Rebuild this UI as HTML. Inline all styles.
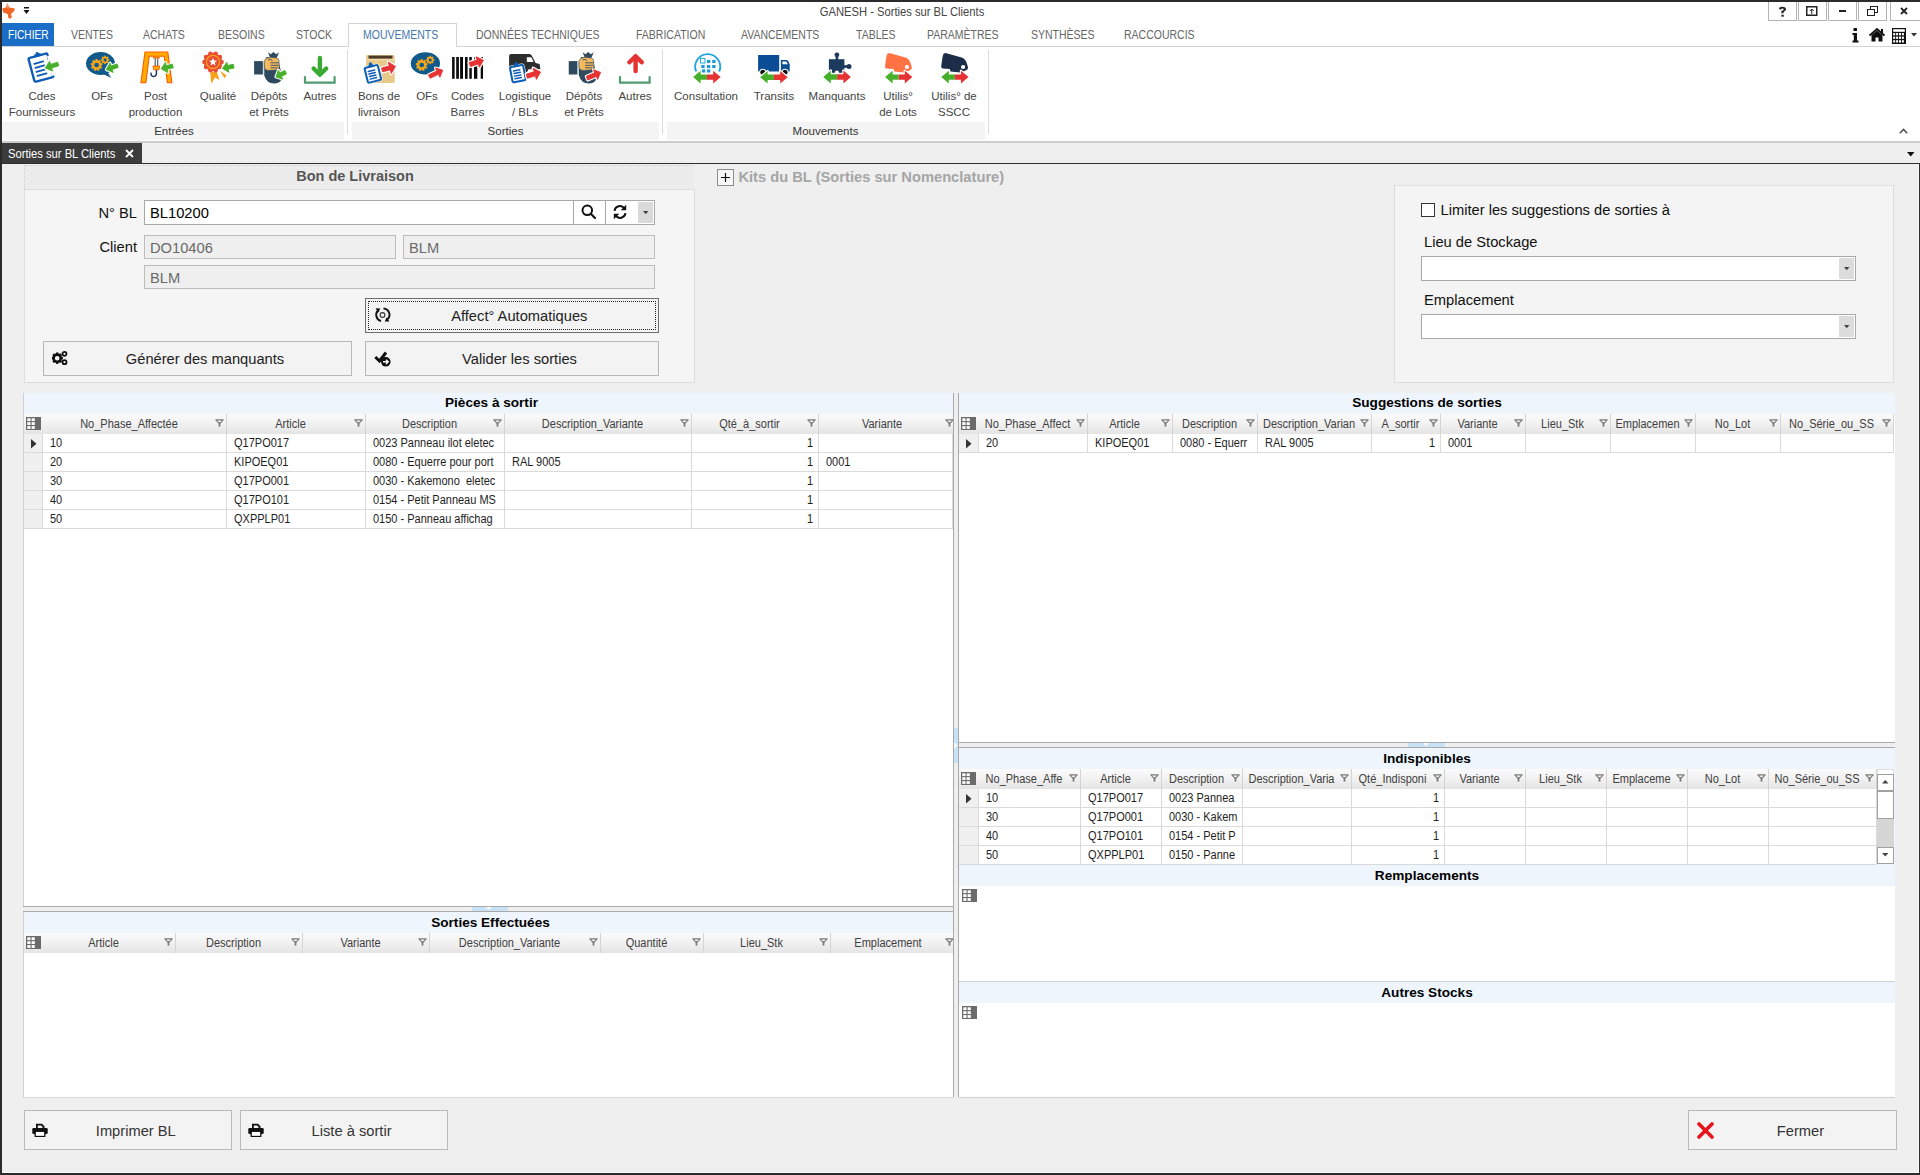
<!DOCTYPE html><html><head><meta charset="utf-8"><title>GANESH - Sorties sur BL Clients</title><style>*{margin:0;padding:0}
html,body{width:1920px;height:1175px;overflow:hidden;background:#efefef;position:relative;font-family:"Liberation Sans",sans-serif}
div{position:absolute}
.t{white-space:nowrap}
</style></head><body><div style="left:0px;top:0px;width:1920px;height:23px;background:#fff"></div>
<div style="left:0px;top:0px;width:1920px;height:2px;background:#2b2b2b"></div>
<div style="left:0px;top:0px;width:2px;height:1175px;background:#2b2b2b"></div>
<div style="left:0px;top:1173px;width:1920px;height:2px;background:#2b2b2b"></div>
<svg style="position:absolute;left:0px;top:0px" width="20" height="22" viewBox="0 0 20 22"><path d="M7.4 3.2 L9.2 7.6 L14.9 8.6 L14.3 10.8 L11.8 13.2 L10.6 14.2 L12 16.6 L10.2 19 L8.2 17.6 L7.8 14.2 L6 13.3 L3.4 12.8 L2.2 8.4 L5.8 7.6 Z" fill="#f26522"/><path d="M7.4 3.2 L9 7.4 L5.9 7.4 Z" fill="#f39a68"/></svg>
<svg style="position:absolute;left:23px;top:7px" width="8" height="8" viewBox="0 0 8 8"><rect x="1" y="0" width="5" height="1.5" fill="#111"/><path d="M0.5 3 L6.5 3 L3.5 7 Z" fill="#111"/></svg>
<div class="t" style="left:751.75px;top:3.10px;width:300px;height:17px;line-height:17px;font-size:12.8px;color:#444;text-align:center;transform:scaleX(0.875);transform-origin:50% 0;">GANESH - Sorties sur BL Clients</div>
<div style="left:1768px;top:2px;width:29px;height:19px;background:#fff;border:1px solid #b4b4b4;border-top:none;box-sizing:border-box"></div>
<div style="left:1798px;top:2px;width:29px;height:19px;background:#fff;border:1px solid #b4b4b4;border-top:none;box-sizing:border-box"></div>
<div style="left:1828px;top:2px;width:29px;height:19px;background:#fff;border:1px solid #b4b4b4;border-top:none;box-sizing:border-box"></div>
<div style="left:1858px;top:2px;width:29px;height:19px;background:#fff;border:1px solid #b4b4b4;border-top:none;box-sizing:border-box"></div>
<div style="left:1890px;top:2px;width:30px;height:19px;background:#fff;border:1px solid #b4b4b4;border-top:none;border-right:none;box-sizing:border-box"></div>
<svg style="position:absolute;left:1778px;top:6px" width="9" height="11" viewBox="0 0 9 11"><path d="M1 3.2 Q1 0.8 4.5 0.8 Q8 0.8 8 3.3 Q8 5 5.6 5.8 L5.6 7.3 L3.4 7.3 L3.4 5 Q5.7 4.5 5.7 3.3 Q5.7 2.5 4.5 2.5 Q3.2 2.5 3.2 3.6 Z" fill="#222"/><rect x="3.4" y="8.7" width="2.3" height="2" fill="#222"/></svg>
<svg style="position:absolute;left:1806px;top:6px" width="12" height="10" viewBox="0 0 12 10"><rect x="0.75" y="0.75" width="10" height="8.5" fill="none" stroke="#222" stroke-width="1.5"/><path d="M5.75 3 L5.75 8 M3.8 5 L5.75 3 L7.7 5" stroke="#222" stroke-width="1" fill="none"/></svg>
<div style="left:1839px;top:10px;width:7px;height:2px;background:#222"></div>
<svg style="position:absolute;left:1867px;top:6px" width="11" height="10" viewBox="0 0 11 10"><rect x="3.5" y="0.5" width="7" height="6" fill="#fff" stroke="#222" stroke-width="1"/><rect x="0.5" y="3.5" width="7" height="6" fill="#fff" stroke="#222" stroke-width="1"/></svg>
<svg style="position:absolute;left:1900px;top:7px" width="8" height="8" viewBox="0 0 8 8"><path d="M1 1 L7 7 M7 1 L1 7" stroke="#222" stroke-width="1.8"/></svg>
<div style="left:2px;top:23px;width:1918px;height:24px;background:#fff"></div>
<div style="left:2px;top:46px;width:1918px;height:1px;background:#d4d4d4"></div>
<div style="left:2px;top:23px;width:52px;height:23px;background:#1a6ec7"></div>
<div class="t" style="left:7.50px;top:26.60px;height:16px;line-height:16px;font-size:12px;color:#fff;transform:scaleX(0.845);transform-origin:0 0;">FICHIER</div>
<div style="left:348px;top:23px;width:109px;height:24px;background:#fff;border:1px solid #d4d4d4;border-bottom:none;box-sizing:border-box"></div>
<div class="t" style="left:70.50px;top:26.60px;height:16px;line-height:16px;font-size:12px;color:#666;transform:scaleX(0.875);transform-origin:0 0;">VENTES</div>
<div class="t" style="left:142.50px;top:26.60px;height:16px;line-height:16px;font-size:12px;color:#666;transform:scaleX(0.875);transform-origin:0 0;">ACHATS</div>
<div class="t" style="left:217.50px;top:26.60px;height:16px;line-height:16px;font-size:12px;color:#666;transform:scaleX(0.875);transform-origin:0 0;">BESOINS</div>
<div class="t" style="left:295.50px;top:26.60px;height:16px;line-height:16px;font-size:12px;color:#666;transform:scaleX(0.875);transform-origin:0 0;">STOCK</div>
<div class="t" style="left:363.30px;top:26.60px;height:16px;line-height:16px;font-size:12px;color:#4677b0;transform:scaleX(0.875);transform-origin:0 0;">MOUVEMENTS</div>
<div class="t" style="left:476.30px;top:26.60px;height:16px;line-height:16px;font-size:12px;color:#666;transform:scaleX(0.875);transform-origin:0 0;">DONNÉES TECHNIQUES</div>
<div class="t" style="left:636.30px;top:26.60px;height:16px;line-height:16px;font-size:12px;color:#666;transform:scaleX(0.875);transform-origin:0 0;">FABRICATION</div>
<div class="t" style="left:741.30px;top:26.60px;height:16px;line-height:16px;font-size:12px;color:#666;transform:scaleX(0.875);transform-origin:0 0;">AVANCEMENTS</div>
<div class="t" style="left:856.30px;top:26.60px;height:16px;line-height:16px;font-size:12px;color:#666;transform:scaleX(0.875);transform-origin:0 0;">TABLES</div>
<div class="t" style="left:926.50px;top:26.60px;height:16px;line-height:16px;font-size:12px;color:#666;transform:scaleX(0.875);transform-origin:0 0;">PARAMÈTRES</div>
<div class="t" style="left:1031.30px;top:26.60px;height:16px;line-height:16px;font-size:12px;color:#666;transform:scaleX(0.875);transform-origin:0 0;">SYNTHÈSES</div>
<div class="t" style="left:1124.40px;top:26.60px;height:16px;line-height:16px;font-size:12px;color:#666;transform:scaleX(0.875);transform-origin:0 0;">RACCOURCIS</div>
<svg style="position:absolute;left:1852px;top:28px" width="7" height="15" viewBox="0 0 7 15"><rect x="1.5" y="0" width="3.5" height="3" fill="#111"/><path d="M0.5 5 L5 5 L5 12.5 L6.5 12.5 L6.5 14.5 L0.5 14.5 L0.5 12.5 L1.8 12.5 L1.8 7 L0.5 7 Z" fill="#111"/></svg>
<svg style="position:absolute;left:1869px;top:28px" width="16" height="14" viewBox="0 0 16 14"><path d="M0.5 7.5 L8 1 L15.5 7.5" stroke="#111" stroke-width="1.8" fill="none"/><rect x="12" y="1" width="2" height="4" fill="#111"/><path d="M2.5 7 L8 2.5 L13.5 7 L13.5 13.5 L9.5 13.5 L9.5 9.5 L6.5 9.5 L6.5 13.5 L2.5 13.5 Z" fill="#111"/></svg>
<svg style="position:absolute;left:1892px;top:28px" width="14" height="16" viewBox="0 0 14 16"><rect x="0" y="0" width="14" height="16" fill="#111"/><rect x="1.2" y="1.2" width="11.6" height="2.6" fill="#fff"/><rect x="1.2" y="5.0" width="2" height="2.3" fill="#fff"/><rect x="4.1" y="5.0" width="2" height="2.3" fill="#fff"/><rect x="7.0" y="5.0" width="2" height="2.3" fill="#fff"/><rect x="9.9" y="5.0" width="2" height="2.3" fill="#fff"/><rect x="1.2" y="8.6" width="2" height="2.3" fill="#fff"/><rect x="4.1" y="8.6" width="2" height="2.3" fill="#fff"/><rect x="7.0" y="8.6" width="2" height="2.3" fill="#fff"/><rect x="9.9" y="8.6" width="2" height="2.3" fill="#fff"/><rect x="1.2" y="12.2" width="2" height="2.3" fill="#fff"/><rect x="4.1" y="12.2" width="2" height="2.3" fill="#fff"/><rect x="7.0" y="12.2" width="2" height="2.3" fill="#fff"/><rect x="9.9" y="12.2" width="2" height="2.3" fill="#fff"/></svg>
<svg style="position:absolute;left:1911px;top:33px" width="7" height="4" viewBox="0 0 7 4"><path d="M0 0 L6 0 L3 3.5 Z" fill="#333"/></svg>
<div style="left:2px;top:47px;width:1918px;height:94px;background:#fff"></div>
<div style="left:2px;top:122px;width:342px;height:18px;background:#f4f4f4"></div>
<div style="left:352px;top:122px;width:307px;height:18px;background:#f4f4f4"></div>
<div style="left:667px;top:122px;width:318px;height:18px;background:#f4f4f4"></div>
<div style="left:347px;top:50px;width:1px;height:84px;background:#dcdcdc"></div>
<div style="left:662px;top:50px;width:1px;height:84px;background:#dcdcdc"></div>
<div style="left:988px;top:50px;width:1px;height:84px;background:#dcdcdc"></div>
<div style="left:2px;top:141px;width:1918px;height:2px;background:#cdcdcd"></div>
<div class="t" style="left:114.00px;top:123.00px;width:120px;height:16px;line-height:16px;font-size:11.5px;color:#333;text-align:center;">Entrées</div>
<div class="t" style="left:445.50px;top:123.00px;width:120px;height:16px;line-height:16px;font-size:11.5px;color:#333;text-align:center;">Sorties</div>
<div class="t" style="left:745.50px;top:123.00px;width:160px;height:16px;line-height:16px;font-size:11.5px;color:#333;text-align:center;">Mouvements</div>
<svg style="position:absolute;left:1899px;top:128px" width="9" height="6" viewBox="0 0 9 6"><path d="M0.8 5.2 L4.5 1.5 L8.2 5.2" stroke="#555" stroke-width="1.6" fill="none"/></svg>
<div class="t" style="left:-8.00px;top:87.80px;width:100px;height:16px;line-height:16px;font-size:11.5px;color:#444;text-align:center;">Cdes</div>
<div class="t" style="left:-8.00px;top:103.80px;width:100px;height:16px;line-height:16px;font-size:11.5px;color:#444;text-align:center;">Fournisseurs</div>
<div class="t" style="left:52.00px;top:87.80px;width:100px;height:16px;line-height:16px;font-size:11.5px;color:#444;text-align:center;">OFs</div>
<div class="t" style="left:105.50px;top:87.80px;width:100px;height:16px;line-height:16px;font-size:11.5px;color:#444;text-align:center;">Post</div>
<div class="t" style="left:105.50px;top:103.80px;width:100px;height:16px;line-height:16px;font-size:11.5px;color:#444;text-align:center;">production</div>
<div class="t" style="left:168.00px;top:87.80px;width:100px;height:16px;line-height:16px;font-size:11.5px;color:#444;text-align:center;">Qualité</div>
<div class="t" style="left:219.00px;top:87.80px;width:100px;height:16px;line-height:16px;font-size:11.5px;color:#444;text-align:center;">Dépôts</div>
<div class="t" style="left:219.00px;top:103.80px;width:100px;height:16px;line-height:16px;font-size:11.5px;color:#444;text-align:center;">et Prêts</div>
<div class="t" style="left:270.00px;top:87.80px;width:100px;height:16px;line-height:16px;font-size:11.5px;color:#444;text-align:center;">Autres</div>
<div class="t" style="left:329.00px;top:87.80px;width:100px;height:16px;line-height:16px;font-size:11.5px;color:#444;text-align:center;">Bons de</div>
<div class="t" style="left:329.00px;top:103.80px;width:100px;height:16px;line-height:16px;font-size:11.5px;color:#444;text-align:center;">livraison</div>
<div class="t" style="left:377.00px;top:87.80px;width:100px;height:16px;line-height:16px;font-size:11.5px;color:#444;text-align:center;">OFs</div>
<div class="t" style="left:417.50px;top:87.80px;width:100px;height:16px;line-height:16px;font-size:11.5px;color:#444;text-align:center;">Codes</div>
<div class="t" style="left:417.50px;top:103.80px;width:100px;height:16px;line-height:16px;font-size:11.5px;color:#444;text-align:center;">Barres</div>
<div class="t" style="left:475.00px;top:87.80px;width:100px;height:16px;line-height:16px;font-size:11.5px;color:#444;text-align:center;">Logistique</div>
<div class="t" style="left:475.00px;top:103.80px;width:100px;height:16px;line-height:16px;font-size:11.5px;color:#444;text-align:center;">/ BLs</div>
<div class="t" style="left:534.00px;top:87.80px;width:100px;height:16px;line-height:16px;font-size:11.5px;color:#444;text-align:center;">Dépôts</div>
<div class="t" style="left:534.00px;top:103.80px;width:100px;height:16px;line-height:16px;font-size:11.5px;color:#444;text-align:center;">et Prêts</div>
<div class="t" style="left:585.00px;top:87.80px;width:100px;height:16px;line-height:16px;font-size:11.5px;color:#444;text-align:center;">Autres</div>
<div class="t" style="left:656.00px;top:87.80px;width:100px;height:16px;line-height:16px;font-size:11.5px;color:#444;text-align:center;">Consultation</div>
<div class="t" style="left:724.00px;top:87.80px;width:100px;height:16px;line-height:16px;font-size:11.5px;color:#444;text-align:center;">Transits</div>
<div class="t" style="left:787.00px;top:87.80px;width:100px;height:16px;line-height:16px;font-size:11.5px;color:#444;text-align:center;">Manquants</div>
<div class="t" style="left:848.00px;top:87.80px;width:100px;height:16px;line-height:16px;font-size:11.5px;color:#444;text-align:center;">Utilis°</div>
<div class="t" style="left:848.00px;top:103.80px;width:100px;height:16px;line-height:16px;font-size:11.5px;color:#444;text-align:center;">de Lots</div>
<div class="t" style="left:904.00px;top:87.80px;width:100px;height:16px;line-height:16px;font-size:11.5px;color:#444;text-align:center;">Utilis° de</div>
<div class="t" style="left:904.00px;top:103.80px;width:100px;height:16px;line-height:16px;font-size:11.5px;color:#444;text-align:center;">SSCC</div>
<svg style="position:absolute;left:0;top:0" width="1000" height="100" viewBox="0 0 1000 100"><g transform="translate(40.9,67.6) rotate(-15)"><rect x="-9.75" y="-12.25" width="19.5" height="24.5" rx="1.5" fill="#fff" stroke="#0d5cb6" stroke-width="2.4"/><path d="M-4.29 -11.25 L-2.92 -14.25 L2.92 -14.25 L4.29 -11.25 Z" fill="#0d5cb6"/><circle cx="0" cy="-14.55" r="1.6" fill="#0d5cb6"/><path d="M-5.46 -5.39 L3.90 -5.39" stroke="#0d5cb6" stroke-width="1.80" stroke-linecap="round"/><path d="M-5.46 -1.22 L3.90 -1.22" stroke="#0d5cb6" stroke-width="1.80" stroke-linecap="round"/><path d="M-5.46 2.94 L3.90 2.94" stroke="#0d5cb6" stroke-width="1.80" stroke-linecap="round"/><path d="M-5.46 7.11 L3.90 7.11" stroke="#0d5cb6" stroke-width="1.80" stroke-linecap="round"/></g><path d="M47 56 L56 54 L60 73 L52 76 Z" fill="#fff"/><path d="M45.30 68.00 L52.64 71.06 L51.69 68.01 L58.76 65.81 L57.64 62.19 L50.56 64.38 L49.62 61.32 Z" fill="#fff" stroke="#fff" stroke-width="3.0" stroke-linejoin="round"/><path d="M45.30 68.00 L52.64 71.06 L51.69 68.01 L58.76 65.81 L57.64 62.19 L50.56 64.38 L49.62 61.32 Z" fill="#46b02a" stroke="#46b02a" stroke-width="0.9" stroke-linejoin="round"/><ellipse cx="100.5" cy="63.5" rx="14.5" ry="11.4" fill="#0f5a8a"/><path d="M99 72 L111.3 78 L105.5 69 Z" fill="#0f5a8a"/><circle cx="96.6" cy="65" r="3.5" fill="none" stroke="#f6a61c" stroke-width="2.3"/><rect x="95.50" y="59.10" width="2.20" height="2.40" fill="#f6a61c" transform="rotate(0.0 96.6 65)"/><rect x="95.50" y="59.10" width="2.20" height="2.40" fill="#f6a61c" transform="rotate(40.0 96.6 65)"/><rect x="95.50" y="59.10" width="2.20" height="2.40" fill="#f6a61c" transform="rotate(80.0 96.6 65)"/><rect x="95.50" y="59.10" width="2.20" height="2.40" fill="#f6a61c" transform="rotate(120.0 96.6 65)"/><rect x="95.50" y="59.10" width="2.20" height="2.40" fill="#f6a61c" transform="rotate(160.0 96.6 65)"/><rect x="95.50" y="59.10" width="2.20" height="2.40" fill="#f6a61c" transform="rotate(200.0 96.6 65)"/><rect x="95.50" y="59.10" width="2.20" height="2.40" fill="#f6a61c" transform="rotate(240.0 96.6 65)"/><rect x="95.50" y="59.10" width="2.20" height="2.40" fill="#f6a61c" transform="rotate(280.0 96.6 65)"/><rect x="95.50" y="59.10" width="2.20" height="2.40" fill="#f6a61c" transform="rotate(320.0 96.6 65)"/><circle cx="105.1" cy="59.9" r="2.4" fill="none" stroke="#f6a61c" stroke-width="1.7"/><rect x="104.25" y="55.70" width="1.70" height="1.80" fill="#f6a61c" transform="rotate(0.0 105.1 59.9)"/><rect x="104.25" y="55.70" width="1.70" height="1.80" fill="#f6a61c" transform="rotate(45.0 105.1 59.9)"/><rect x="104.25" y="55.70" width="1.70" height="1.80" fill="#f6a61c" transform="rotate(90.0 105.1 59.9)"/><rect x="104.25" y="55.70" width="1.70" height="1.80" fill="#f6a61c" transform="rotate(135.0 105.1 59.9)"/><rect x="104.25" y="55.70" width="1.70" height="1.80" fill="#f6a61c" transform="rotate(180.0 105.1 59.9)"/><rect x="104.25" y="55.70" width="1.70" height="1.80" fill="#f6a61c" transform="rotate(225.0 105.1 59.9)"/><rect x="104.25" y="55.70" width="1.70" height="1.80" fill="#f6a61c" transform="rotate(270.0 105.1 59.9)"/><rect x="104.25" y="55.70" width="1.70" height="1.80" fill="#f6a61c" transform="rotate(315.0 105.1 59.9)"/><path d="M106.30 69.50 L113.16 72.38 L112.18 69.44 L118.27 67.41 L117.13 63.99 L111.04 66.02 L110.06 63.08 Z" fill="#fff" stroke="#fff" stroke-width="3.0" stroke-linejoin="round"/><path d="M106.30 69.50 L113.16 72.38 L112.18 69.44 L118.27 67.41 L117.13 63.99 L111.04 66.02 L110.06 63.08 Z" fill="#46b02a" stroke="#46b02a" stroke-width="0.9" stroke-linejoin="round"/><path d="M145 52 L167.8 52 L171.9 82.7 L167.4 82.7 L164.2 56.3 L149.2 56.3 L145.9 82.7 L140.9 82.7 Z" fill="#ffab00" stroke="#ff5a00" stroke-width="1.1" stroke-linejoin="round"/><rect x="153" y="56.3" width="6.8" height="2.3" fill="#ff7a00"/><path d="M155.2 58.5 L155.2 66 M157.7 58.5 L157.7 66" stroke="#4a5568" stroke-width="1.1"/><path d="M153 66 L159.8 66 L159 69.8 L153.8 69.8 Z" fill="#ffab00" stroke="#ff5a00" stroke-width="0.9"/><path d="M156.4 70 L156.4 73.8 A2.7 2.7 0 1 1 151.3 72.6" stroke="#1e3a5f" stroke-width="1.5" fill="none"/><path d="M161.20 68.80 L167.86 72.54 L167.09 69.33 L173.25 67.85 L172.35 64.15 L166.20 65.64 L165.42 62.43 Z" fill="#fff" stroke="#fff" stroke-width="3.0" stroke-linejoin="round"/><path d="M161.20 68.80 L167.86 72.54 L167.09 69.33 L173.25 67.85 L172.35 64.15 L166.20 65.64 L165.42 62.43 Z" fill="#46b02a" stroke="#46b02a" stroke-width="0.9" stroke-linejoin="round"/><path d="M210.2 72.3 L216.7 71.8 L219.4 80 L215 77.6 L211.3 83.7 Z" fill="#f7a21b"/><path d="M220.1 71.1 L226.6 75.2 L224.5 78.2 Z" fill="#f7a21b"/><circle cx="221.60" cy="62.00" r="2.2" fill="#e94b35"/><circle cx="219.96" cy="67.05" r="2.2" fill="#e94b35"/><circle cx="215.66" cy="70.18" r="2.2" fill="#e94b35"/><circle cx="210.34" cy="70.18" r="2.2" fill="#e94b35"/><circle cx="206.04" cy="67.05" r="2.2" fill="#e94b35"/><circle cx="204.40" cy="62.00" r="2.2" fill="#e94b35"/><circle cx="206.04" cy="56.95" r="2.2" fill="#e94b35"/><circle cx="210.34" cy="53.82" r="2.2" fill="#e94b35"/><circle cx="215.66" cy="53.82" r="2.2" fill="#e94b35"/><circle cx="219.96" cy="56.95" r="2.2" fill="#e94b35"/><circle cx="213" cy="62" r="9.2" fill="#e94b35"/><circle cx="213" cy="62" r="6.6" fill="none" stroke="#f7a21b" stroke-width="1.3"/><path d="M213.00 57.70 L214.12 60.46 L217.09 60.67 L214.81 62.59 L215.53 65.48 L213.00 63.90 L210.47 65.48 L211.19 62.59 L208.91 60.67 L211.88 60.46 Z" fill="#fff"/><path d="M222.50 68.40 L228.88 72.34 L228.26 69.20 L234.07 68.06 L233.33 64.34 L227.53 65.48 L226.91 62.34 Z" fill="#fff" stroke="#fff" stroke-width="3.0" stroke-linejoin="round"/><path d="M222.50 68.40 L228.88 72.34 L228.26 69.20 L234.07 68.06 L233.33 64.34 L227.53 65.48 L226.91 62.34 Z" fill="#46b02a" stroke="#46b02a" stroke-width="0.9" stroke-linejoin="round"/><g transform="translate(0,0)"><path d="M266.5 57 Q262.5 66 264.3 75.5 Q266.5 83.6 274.5 83.5 Q281.8 83.2 281.5 77 Q281 67 276.5 57 Z" fill="#2f4a5e"/><path d="M268 52.3 L270.8 54.2 L273.5 52 L276.2 54.2 L279 52.3 L277.2 57 L269.8 57 Z" fill="#2f4a5e"/><rect x="254.1" y="61.1" width="8.8" height="13.4" fill="#2f4a5e"/><rect x="262.9" y="61.5" width="1.4" height="12.6" fill="#cfdce8"/><path d="M264.3 61 Q265.5 57.3 270.5 57.3 L276.5 58 Q279.3 58.8 279 61 L279.3 66.5 Q279 69.8 275.5 70 L268.5 70.4 Q264.6 70.5 264.3 67 Z" fill="#f5b95e" stroke="#2f4a5e" stroke-width="0.6"/><path d="M270.5 62.8 L278.8 62.8 M270.5 65.3 L278.6 65.3 M270.5 67.8 L277.6 67.8" stroke="#2f4a5e" stroke-width="0.9"/><path d="M268 60 Q270 58.6 272.5 60.5" stroke="#2f4a5e" stroke-width="0.9" fill="none"/></g><path d="M275.90 76.90 L282.75 79.16 L281.41 76.36 L286.52 73.91 L284.88 70.49 L279.77 72.94 L278.43 70.14 Z" fill="#fff" stroke="#fff" stroke-width="3.0" stroke-linejoin="round"/><path d="M275.90 76.90 L282.75 79.16 L281.41 76.36 L286.52 73.91 L284.88 70.49 L279.77 72.94 L278.43 70.14 Z" fill="#46b02a" stroke="#46b02a" stroke-width="0.9" stroke-linejoin="round"/><path d="M319.9 58 L319.9 70" stroke="#3aaa35" stroke-width="4.4" stroke-linecap="round"/><path d="M313.6 68.5 L319.9 74.8 L326.2 68.5" stroke="#3aaa35" stroke-width="4.4" fill="none" stroke-linecap="round" stroke-linejoin="round"/><path d="M305 77 L305 82.6 L334.6 82.6 L334.6 77" stroke="#4e9c70" stroke-width="2.2" fill="none" stroke-linecap="round"/><rect x="366.1" y="55.1" width="28.6" height="27.9" rx="1.5" fill="#e9c98a"/><rect x="368.5" y="55.6" width="24" height="3.2" fill="#4b3a28"/><rect x="367" y="58.8" width="27" height="1.5" fill="#f3dcae"/><g transform="translate(372.85,73.85) rotate(-14)"><rect x="-6.8" y="-7.7" width="13.6" height="15.4" rx="1.5" fill="#fff" stroke="#fff" stroke-width="3"/><rect x="-6.8" y="-7.7" width="13.6" height="15.4" rx="1.5" fill="#fff" stroke="#0d5cb6" stroke-width="2.0"/><path d="M-2.99 -6.70 L-2.04 -9.70 L2.04 -9.70 L2.99 -6.70 Z" fill="#0d5cb6"/><circle cx="0" cy="-10.00" r="1.6" fill="#0d5cb6"/><path d="M-3.81 -3.39 L2.72 -3.39" stroke="#0d5cb6" stroke-width="1.50" stroke-linecap="round"/><path d="M-3.81 -0.77 L2.72 -0.77" stroke="#0d5cb6" stroke-width="1.50" stroke-linecap="round"/><path d="M-3.81 1.85 L2.72 1.85" stroke="#0d5cb6" stroke-width="1.50" stroke-linecap="round"/><path d="M-3.81 4.47 L2.72 4.47" stroke="#0d5cb6" stroke-width="1.50" stroke-linecap="round"/></g><path d="M395.40 66.40 L388.29 62.17 L389.28 65.94 L381.59 67.97 L382.61 71.83 L390.30 69.81 L391.29 73.58 Z" fill="#fff" stroke="#fff" stroke-width="3.2" stroke-linejoin="round"/><path d="M395.40 66.40 L388.29 62.17 L389.28 65.94 L381.59 67.97 L382.61 71.83 L390.30 69.81 L391.29 73.58 Z" fill="#e63232" stroke="#e63232" stroke-width="0.9" stroke-linejoin="round"/><ellipse cx="425.4" cy="63.4" rx="14.6" ry="11.2" fill="#0f5a8a"/><path d="M424 72 L436 78 L430.5 69 Z" fill="#0f5a8a"/><circle cx="421.7" cy="65" r="3.5" fill="none" stroke="#f6a61c" stroke-width="2.3"/><rect x="420.60" y="59.10" width="2.20" height="2.40" fill="#f6a61c" transform="rotate(0.0 421.7 65)"/><rect x="420.60" y="59.10" width="2.20" height="2.40" fill="#f6a61c" transform="rotate(40.0 421.7 65)"/><rect x="420.60" y="59.10" width="2.20" height="2.40" fill="#f6a61c" transform="rotate(80.0 421.7 65)"/><rect x="420.60" y="59.10" width="2.20" height="2.40" fill="#f6a61c" transform="rotate(120.0 421.7 65)"/><rect x="420.60" y="59.10" width="2.20" height="2.40" fill="#f6a61c" transform="rotate(160.0 421.7 65)"/><rect x="420.60" y="59.10" width="2.20" height="2.40" fill="#f6a61c" transform="rotate(200.0 421.7 65)"/><rect x="420.60" y="59.10" width="2.20" height="2.40" fill="#f6a61c" transform="rotate(240.0 421.7 65)"/><rect x="420.60" y="59.10" width="2.20" height="2.40" fill="#f6a61c" transform="rotate(280.0 421.7 65)"/><rect x="420.60" y="59.10" width="2.20" height="2.40" fill="#f6a61c" transform="rotate(320.0 421.7 65)"/><circle cx="430.2" cy="60" r="2.4" fill="none" stroke="#f6a61c" stroke-width="1.7"/><rect x="429.35" y="55.80" width="1.70" height="1.80" fill="#f6a61c" transform="rotate(0.0 430.2 60)"/><rect x="429.35" y="55.80" width="1.70" height="1.80" fill="#f6a61c" transform="rotate(45.0 430.2 60)"/><rect x="429.35" y="55.80" width="1.70" height="1.80" fill="#f6a61c" transform="rotate(90.0 430.2 60)"/><rect x="429.35" y="55.80" width="1.70" height="1.80" fill="#f6a61c" transform="rotate(135.0 430.2 60)"/><rect x="429.35" y="55.80" width="1.70" height="1.80" fill="#f6a61c" transform="rotate(180.0 430.2 60)"/><rect x="429.35" y="55.80" width="1.70" height="1.80" fill="#f6a61c" transform="rotate(225.0 430.2 60)"/><rect x="429.35" y="55.80" width="1.70" height="1.80" fill="#f6a61c" transform="rotate(270.0 430.2 60)"/><rect x="429.35" y="55.80" width="1.70" height="1.80" fill="#f6a61c" transform="rotate(315.0 430.2 60)"/><path d="M442.70 70.20 L435.41 67.92 L436.83 70.90 L428.48 74.89 L430.12 78.31 L438.47 74.33 L439.89 77.31 Z" fill="#fff" stroke="#fff" stroke-width="3.0" stroke-linejoin="round"/><path d="M442.70 70.20 L435.41 67.92 L436.83 70.90 L428.48 74.89 L430.12 78.31 L438.47 74.33 L439.89 77.31 Z" fill="#e63232" stroke="#e63232" stroke-width="0.9" stroke-linejoin="round"/><rect x="452.1" y="57" width="2.50" height="21.8" fill="#0a0a0a"/><rect x="456.2" y="57" width="2.70" height="21.8" fill="#0a0a0a"/><rect x="460.1" y="57" width="2.90" height="21.8" fill="#0a0a0a"/><rect x="465" y="57" width="2.60" height="21.8" fill="#0a0a0a"/><rect x="469.3" y="57" width="2.50" height="21.8" fill="#0a0a0a"/><rect x="474" y="57" width="3.30" height="21.8" fill="#0a0a0a"/><rect x="480.7" y="57" width="2.30" height="21.8" fill="#0a0a0a"/><path d="M483.40 60.20 L476.02 56.76 L477.05 60.01 L469.17 62.50 L470.43 66.50 L478.31 64.01 L479.34 67.25 Z" fill="#fff" stroke="#fff" stroke-width="3.4" stroke-linejoin="round"/><path d="M483.40 60.20 L476.02 56.76 L477.05 60.01 L469.17 62.50 L470.43 66.50 L478.31 64.01 L479.34 67.25 Z" fill="#e63232" stroke="#e63232" stroke-width="0.9" stroke-linejoin="round"/><path d="M509.1 56 Q509.1 54.1 511 54.1 L529.5 54.1 Q531 54.1 532 56 L535.6 63 L539.6 64 L540.4 69.3 L528.5 69.3 L527 72 L509.1 72 Z" fill="#2d2d2d"/><path d="M526.8 57.2 L531.3 57.2 L533.6 62 L526.8 62 Z" fill="#fff"/><g transform="translate(517.85,73.6) rotate(-11)"><rect x="-6.7" y="-7.7" width="13.4" height="15.4" rx="1.5" fill="#fff" stroke="#fff" stroke-width="3"/><rect x="-6.7" y="-7.7" width="13.4" height="15.4" rx="1.5" fill="#fff" stroke="#0d5cb6" stroke-width="2.0"/><path d="M-2.95 -6.70 L-2.01 -9.70 L2.01 -9.70 L2.95 -6.70 Z" fill="#0d5cb6"/><circle cx="0" cy="-10.00" r="1.6" fill="#0d5cb6"/><path d="M-3.75 -3.39 L2.68 -3.39" stroke="#0d5cb6" stroke-width="1.50" stroke-linecap="round"/><path d="M-3.75 -0.77 L2.68 -0.77" stroke="#0d5cb6" stroke-width="1.50" stroke-linecap="round"/><path d="M-3.75 1.85 L2.68 1.85" stroke="#0d5cb6" stroke-width="1.50" stroke-linecap="round"/><path d="M-3.75 4.47 L2.68 4.47" stroke="#0d5cb6" stroke-width="1.50" stroke-linecap="round"/></g><path d="M540.50 72.10 L533.09 68.26 L534.15 71.81 L526.20 74.19 L527.40 78.21 L535.35 75.83 L536.41 79.38 Z" fill="#fff" stroke="#fff" stroke-width="3.2" stroke-linejoin="round"/><path d="M540.50 72.10 L533.09 68.26 L534.15 71.81 L526.20 74.19 L527.40 78.21 L535.35 75.83 L536.41 79.38 Z" fill="#e63232" stroke="#e63232" stroke-width="0.9" stroke-linejoin="round"/><g transform="translate(314.65,0)"><path d="M266.5 57 Q262.5 66 264.3 75.5 Q266.5 83.6 274.5 83.5 Q281.8 83.2 281.5 77 Q281 67 276.5 57 Z" fill="#2f4a5e"/><path d="M268 52.3 L270.8 54.2 L273.5 52 L276.2 54.2 L279 52.3 L277.2 57 L269.8 57 Z" fill="#2f4a5e"/><rect x="254.1" y="61.1" width="8.8" height="13.4" fill="#2f4a5e"/><rect x="262.9" y="61.5" width="1.4" height="12.6" fill="#cfdce8"/><path d="M264.3 61 Q265.5 57.3 270.5 57.3 L276.5 58 Q279.3 58.8 279 61 L279.3 66.5 Q279 69.8 275.5 70 L268.5 70.4 Q264.6 70.5 264.3 67 Z" fill="#f5b95e" stroke="#2f4a5e" stroke-width="0.6"/><path d="M270.5 62.8 L278.8 62.8 M270.5 65.3 L278.6 65.3 M270.5 67.8 L277.6 67.8" stroke="#2f4a5e" stroke-width="0.9"/><path d="M268 60 Q270 58.6 272.5 60.5" stroke="#2f4a5e" stroke-width="0.9" fill="none"/></g><path d="M600.60 72.40 L593.46 69.68 L594.76 72.72 L586.22 76.36 L587.78 80.04 L596.33 76.40 L597.62 79.43 Z" fill="#fff" stroke="#fff" stroke-width="3.0" stroke-linejoin="round"/><path d="M600.60 72.40 L593.46 69.68 L594.76 72.72 L586.22 76.36 L587.78 80.04 L596.33 76.40 L597.62 79.43 Z" fill="#e63232" stroke="#e63232" stroke-width="0.9" stroke-linejoin="round"/><path d="M635.6 71 L635.6 60" stroke="#e63232" stroke-width="4.4" stroke-linecap="round"/><path d="M629.4 62.3 L635.6 56.2 L641.8 62.3" stroke="#e63232" stroke-width="4.4" fill="none" stroke-linecap="round" stroke-linejoin="round"/><path d="M620 77 L620 82.6 L649.6 82.6 L649.6 77" stroke="#4e9c70" stroke-width="2.2" fill="none" stroke-linecap="round"/><path d="M696.2 71.5 A12.5 12.5 0 1 1 719.2 71.5" stroke="#1ea5e0" stroke-width="1.9" fill="none"/><rect x="700.4" y="58.4" width="4.6" height="4.6" fill="#fff" stroke="#1ea5e0" stroke-width="1"/><rect x="707" y="59.9" width="3.3" height="3.1" fill="#1a9ad6"/><rect x="712.2" y="59.9" width="3.3" height="3.1" fill="#1a9ad6"/><rect x="701.3" y="65" width="3.3" height="3.1" fill="#1a9ad6"/><rect x="707" y="65" width="3.3" height="3.1" fill="#1a9ad6"/><rect x="712.2" y="65" width="3.3" height="3.1" fill="#1a9ad6"/><rect x="701.9" y="69.4" width="3.3" height="3.1" fill="#1a9ad6"/><rect x="707" y="69.4" width="3.3" height="3.1" fill="#1a9ad6"/><path d="M693.1 77.1 L700.6 70.8 L700.6 74.39999999999999 L706.9000000000001 74.39999999999999 L706.9000000000001 79.8 L700.6 79.8 L700.6 83.4 Z M720.7 77.1 L713.2 70.8 L713.2 74.39999999999999 L706.9000000000001 74.39999999999999 L706.9000000000001 79.8 L713.2 79.8 L713.2 83.4 Z" fill="#fff" stroke="#fff" stroke-width="2.4" stroke-linejoin="round"/><path d="M693.1 77.1 L700.6 70.8 L700.6 74.39999999999999 L706.9000000000001 74.39999999999999 L706.9000000000001 79.8 L700.6 79.8 L700.6 83.4 Z" fill="#46b02a"/><path d="M720.7 77.1 L713.2 70.8 L713.2 74.39999999999999 L706.9000000000001 74.39999999999999 L706.9000000000001 79.8 L713.2 79.8 L713.2 83.4 Z" fill="#e63232"/><rect x="758.1" y="55" width="21.1" height="16.5" fill="#0b4d94"/><path d="M780.9 59.9 L786.5 59.9 Q787.5 59.9 788.2 61 L789.7 64.5 L789.7 71.5 L780.9 71.5 Z" fill="#0b4d94"/><path d="M782.4 61.4 L786.3 61.4 L787.8 64.3 L782.4 64.3 Z" fill="#fff"/><circle cx="762.8" cy="72.3" r="3.6" fill="#fff"/><circle cx="785" cy="72.3" r="3.6" fill="#fff"/><circle cx="762.8" cy="72.3" r="2.5" fill="#111"/><circle cx="785" cy="72.3" r="2.5" fill="#111"/><path d="M760.1 77.25 L767.6 71.1 L767.6 74.55 L773.9000000000001 74.55 L773.9000000000001 79.95 L767.6 79.95 L767.6 83.4 Z M787.7 77.25 L780.2 71.1 L780.2 74.55 L773.9000000000001 74.55 L773.9000000000001 79.95 L780.2 79.95 L780.2 83.4 Z" fill="#fff" stroke="#fff" stroke-width="2.4" stroke-linejoin="round"/><path d="M760.1 77.25 L767.6 71.1 L767.6 74.55 L773.9000000000001 74.55 L773.9000000000001 79.95 L767.6 79.95 L767.6 83.4 Z" fill="#46b02a"/><path d="M787.7 77.25 L780.2 71.1 L780.2 74.55 L773.9000000000001 74.55 L773.9000000000001 79.95 L780.2 79.95 L780.2 83.4 Z" fill="#e63232"/><rect x="828.9" y="59.2" width="15.5" height="13.6" fill="#1c3a5e"/><circle cx="836.9" cy="54.8" r="2.4" fill="#1c3a5e"/><rect x="835.6" y="56" width="2.6" height="4" fill="#1c3a5e"/><circle cx="849" cy="66.5" r="2.5" fill="#1c3a5e"/><rect x="843.5" y="65.2" width="4" height="2.6" fill="#1c3a5e"/><circle cx="836.9" cy="72.6" r="2" fill="#fff"/><path d="M823.3 77.05 L830.8 70.5 L830.8 74.35 L837.0999999999999 74.35 L837.0999999999999 79.75 L830.8 79.75 L830.8 83.6 Z M850.9 77.05 L843.4 70.5 L843.4 74.35 L837.0999999999999 74.35 L837.0999999999999 79.75 L843.4 79.75 L843.4 83.6 Z" fill="#fff" stroke="#fff" stroke-width="2.4" stroke-linejoin="round"/><path d="M823.3 77.05 L830.8 70.5 L830.8 74.35 L837.0999999999999 74.35 L837.0999999999999 79.75 L830.8 79.75 L830.8 83.6 Z" fill="#46b02a"/><path d="M850.9 77.05 L843.4 70.5 L843.4 74.35 L837.0999999999999 74.35 L837.0999999999999 79.75 L843.4 79.75 L843.4 83.6 Z" fill="#e63232"/><g transform="translate(0,0)"><path d="M889.2 53.1 L905.5 57.5 Q909 58.5 910.5 63 L911.9 67.5 Q912 69.5 909.5 70.6 L904 72.6 L894.3 71.6 L893.6 69.1 L886.5 68.6 Q884.8 68.3 885 66 L886.5 56 Q887 53 889.2 53.1 Z" fill="#ff7244"/><circle cx="906.9" cy="67" r="2.1" fill="#fff"/></g><path d="M885.1 77.1 L892.6 70.8 L892.6 74.39999999999999 L898.7 74.39999999999999 L898.7 79.8 L892.6 79.8 L892.6 83.4 Z M912.3 77.1 L904.8 70.8 L904.8 74.39999999999999 L898.7 74.39999999999999 L898.7 79.8 L904.8 79.8 L904.8 83.4 Z" fill="#fff" stroke="#fff" stroke-width="2.4" stroke-linejoin="round"/><path d="M885.1 77.1 L892.6 70.8 L892.6 74.39999999999999 L898.7 74.39999999999999 L898.7 79.8 L892.6 79.8 L892.6 83.4 Z" fill="#46b02a"/><path d="M912.3 77.1 L904.8 70.8 L904.8 74.39999999999999 L898.7 74.39999999999999 L898.7 79.8 L904.8 79.8 L904.8 83.4 Z" fill="#e63232"/><g transform="translate(56.2,0)"><path d="M889.2 53.1 L905.5 57.5 Q909 58.5 910.5 63 L911.9 67.5 Q912 69.5 909.5 70.6 L904 72.6 L894.3 71.6 L893.6 69.1 L886.5 68.6 Q884.8 68.3 885 66 L886.5 56 Q887 53 889.2 53.1 Z" fill="#1b2d49"/><circle cx="906.9" cy="67" r="2.1" fill="#fff"/></g><path d="M941.3 77.1 L948.8 70.8 L948.8 74.39999999999999 L954.9 74.39999999999999 L954.9 79.8 L948.8 79.8 L948.8 83.4 Z M968.5 77.1 L961.0 70.8 L961.0 74.39999999999999 L954.9 74.39999999999999 L954.9 79.8 L961.0 79.8 L961.0 83.4 Z" fill="#fff" stroke="#fff" stroke-width="2.4" stroke-linejoin="round"/><path d="M941.3 77.1 L948.8 70.8 L948.8 74.39999999999999 L954.9 74.39999999999999 L954.9 79.8 L948.8 79.8 L948.8 83.4 Z" fill="#46b02a"/><path d="M968.5 77.1 L961.0 70.8 L961.0 74.39999999999999 L954.9 74.39999999999999 L954.9 79.8 L961.0 79.8 L961.0 83.4 Z" fill="#e63232"/></svg>
<div style="left:2px;top:143px;width:1918px;height:20px;background:#efefef"></div>
<div style="left:2px;top:143px;width:140px;height:20px;background:#3c3c3c"></div>
<div class="t" style="left:8.00px;top:145.30px;height:17px;line-height:17px;font-size:12.8px;color:#fff;transform:scaleX(0.875);transform-origin:0 0;">Sorties sur BL Clients</div>
<svg style="position:absolute;left:125px;top:149px" width="9" height="9" viewBox="0 0 9 9"><path d="M1 1 L8 8 M8 1 L1 8" stroke="#fff" stroke-width="1.8"/></svg>
<svg style="position:absolute;left:1907px;top:152px" width="8" height="5" viewBox="0 0 8 5"><path d="M0 0 L7.5 0 L3.75 4.5 Z" fill="#111"/></svg>
<div style="left:2px;top:163px;width:1918px;height:1px;background:#2e2e2e"></div>
<div style="left:1919px;top:163px;width:1px;height:1012px;background:#2e2e2e"></div>
<div style="left:2px;top:164px;width:1917px;height:1009px;background:#efefef"></div>
<div style="left:1918px;top:164px;width:1px;height:1009px;background:#fbfbfb"></div>
<div style="left:2px;top:1172px;width:1917px;height:1px;background:#fbfbfb"></div>
<div style="left:24px;top:165px;width:670px;height:24px;background:#ececec;border-top:1px dotted #d0d0d0;border-left:1px dotted #d0d0d0;box-sizing:border-box"></div>
<div class="t" style="left:205.00px;top:166.30px;width:300px;height:20px;line-height:20px;font-size:14.5px;color:#555;font-weight:bold;text-align:center;">Bon de Livraison</div>
<div style="left:24px;top:189px;width:671px;height:194px;background:#f5f5f5;border:1px solid #dedede;box-sizing:border-box"></div>
<div class="t" style="left:37.00px;top:202.50px;width:100px;height:20px;line-height:20px;font-size:14.7px;color:#111;text-align:right;">N° BL</div>
<div style="left:144px;top:200px;width:511px;height:25px;background:#fff;border:1px solid #a8a8a8;box-sizing:border-box"></div>
<div class="t" style="left:150.00px;top:202.50px;height:20px;line-height:20px;font-size:14.7px;color:#000;">BL10200</div>
<div style="left:573px;top:201px;width:1px;height:23px;background:#a8a8a8"></div>
<div style="left:605px;top:201px;width:1px;height:23px;background:#a8a8a8"></div>
<svg style="position:absolute;left:581px;top:204px" width="16" height="16" viewBox="0 0 16 16"><circle cx="6.3" cy="6.3" r="4.8" stroke="#111" stroke-width="2" fill="none"/><path d="M9.8 9.8 L14 14" stroke="#111" stroke-width="2.2" stroke-linecap="round"/></svg>
<svg style="position:absolute;left:612px;top:204px" width="16" height="16" viewBox="0 0 16 16"><path d="M2.5 6.8 A5.5 5.5 0 0 1 12.3 4.3" stroke="#111" stroke-width="2" fill="none"/><path d="M14.2 0.8 L14.2 6.3 L8.7 6.3 Z" fill="#111"/><path d="M13.5 9.2 A5.5 5.5 0 0 1 3.7 11.7" stroke="#111" stroke-width="2" fill="none"/><path d="M1.8 15.2 L1.8 9.7 L7.3 9.7 Z" fill="#111"/></svg>
<div style="left:638px;top:202px;width:15px;height:21px;background:#dadada"></div>
<svg style="position:absolute;left:643px;top:211px" width="6" height="4" viewBox="0 0 6 4"><path d="M0 0 L5.5 0 L2.75 3.2 Z" fill="#444"/></svg>
<div class="t" style="left:37.00px;top:236.50px;width:100px;height:20px;line-height:20px;font-size:14.7px;color:#111;text-align:right;">Client</div>
<div style="left:144px;top:235px;width:252px;height:24px;background:#efefef;border:1px solid #bcbcbc;box-sizing:border-box"></div>
<div class="t" style="left:150.00px;top:237.50px;height:20px;line-height:20px;font-size:14.7px;color:#6a6a6a;">DO10406</div>
<div style="left:403px;top:235px;width:252px;height:24px;background:#efefef;border:1px solid #bcbcbc;box-sizing:border-box"></div>
<div class="t" style="left:409.00px;top:237.50px;height:20px;line-height:20px;font-size:14.7px;color:#6a6a6a;">BLM</div>
<div style="left:144px;top:265px;width:511px;height:24px;background:#efefef;border:1px solid #bcbcbc;box-sizing:border-box"></div>
<div class="t" style="left:150.00px;top:267.50px;height:20px;line-height:20px;font-size:14.7px;color:#6a6a6a;">BLM</div>
<div style="left:365px;top:298px;width:294px;height:35px;background:#f3f3f3;border:1px solid #6e6e6e;box-sizing:border-box"></div>
<div style="left:368px;top:301px;width:288px;height:29px;border:1px dotted #222;box-sizing:border-box"></div>
<div class="t" style="left:389.30px;top:305.50px;width:260px;height:20px;line-height:20px;font-size:14.7px;color:#222;text-align:center;">Affect° Automatiques</div>
<svg style="position:absolute;left:374px;top:306px" width="17" height="18" viewBox="0 0 17 18"><path d="M4 4.5 A6.3 6.3 0 0 0 7 15" stroke="#111" stroke-width="1.9" fill="none"/><path d="M9.5 2.5 A6.3 6.3 0 0 1 13 13.8" stroke="#111" stroke-width="1.9" fill="none"/><path d="M1.5 2.2 L6.3 2.4 L4.4 6.4 Z" fill="#111"/><path d="M15.5 15.6 L10.7 15.4 L12.6 11.4 Z" fill="#111"/><circle cx="8.5" cy="9" r="2.4" stroke="#333" stroke-width="1.1" fill="none"/></svg>
<div style="left:43px;top:341px;width:309px;height:35px;background:#f3f3f3;border:1px solid #b8b8b8;box-sizing:border-box"></div>
<div class="t" style="left:75.00px;top:348.80px;width:260px;height:20px;line-height:20px;font-size:14.7px;color:#222;text-align:center;">Générer des manquants</div>
<svg style="position:absolute;left:52px;top:350px" width="17" height="16" viewBox="0 0 17 16"><circle cx="5.2" cy="8.2" r="3.6" fill="none" stroke="#111" stroke-width="2.6"/><rect x="4" y="2.5" width="2.4" height="2.4" fill="#111" transform="rotate(0 5.2 8.2)"/><rect x="4" y="2.5" width="2.4" height="2.4" fill="#111" transform="rotate(45 5.2 8.2)"/><rect x="4" y="2.5" width="2.4" height="2.4" fill="#111" transform="rotate(90 5.2 8.2)"/><rect x="4" y="2.5" width="2.4" height="2.4" fill="#111" transform="rotate(135 5.2 8.2)"/><rect x="4" y="2.5" width="2.4" height="2.4" fill="#111" transform="rotate(180 5.2 8.2)"/><rect x="4" y="2.5" width="2.4" height="2.4" fill="#111" transform="rotate(225 5.2 8.2)"/><rect x="4" y="2.5" width="2.4" height="2.4" fill="#111" transform="rotate(270 5.2 8.2)"/><rect x="4" y="2.5" width="2.4" height="2.4" fill="#111" transform="rotate(315 5.2 8.2)"/><circle cx="12.5" cy="3.8" r="2" fill="none" stroke="#111" stroke-width="1.8"/><circle cx="12.5" cy="12.2" r="2" fill="none" stroke="#111" stroke-width="1.8"/></svg>
<div style="left:365px;top:341px;width:294px;height:35px;background:#f3f3f3;border:1px solid #b8b8b8;box-sizing:border-box"></div>
<div class="t" style="left:389.50px;top:348.80px;width:260px;height:20px;line-height:20px;font-size:14.7px;color:#222;text-align:center;">Valider les sorties</div>
<svg style="position:absolute;left:374px;top:350px" width="17" height="17" viewBox="0 0 17 17"><path d="M1.3 7 L5.5 11 L12 2.5" stroke="#111" stroke-width="3" fill="none"/><circle cx="11.8" cy="11.8" r="4.8" fill="#111"/><path d="M9 11.8 L14 11.8 M12 9.7 L14.2 11.8 L12 13.9" stroke="#fff" stroke-width="1.4" fill="none"/></svg>
<div style="left:717px;top:169px;width:17px;height:17px;background:#f7f7f7;border:1px solid #8c8c8c;box-sizing:border-box"></div>
<svg style="position:absolute;left:720px;top:172px" width="11" height="11" viewBox="0 0 11 11"><path d="M5.5 1 L5.5 10 M1 5.5 L10 5.5" stroke="#111" stroke-width="1.2"/></svg>
<div class="t" style="left:738.40px;top:166.70px;height:20px;line-height:20px;font-size:14.7px;color:#a5a5a5;font-weight:bold;">Kits du BL (Sorties sur Nomenclature)</div>
<div style="left:1394px;top:185px;width:500px;height:198px;background:#f4f4f4;border:1px solid #dcdcdc;border-top:1px dotted #cfcfcf;box-sizing:border-box"></div>
<div style="left:1421px;top:203px;width:14px;height:14px;background:#fff;border:1px solid #333;box-sizing:border-box"></div>
<div class="t" style="left:1440.50px;top:199.70px;height:20px;line-height:20px;font-size:14.7px;color:#111;">Limiter les suggestions de sorties à</div>
<div class="t" style="left:1424.00px;top:231.70px;height:20px;line-height:20px;font-size:14.7px;color:#111;">Lieu de Stockage</div>
<div class="t" style="left:1424.00px;top:289.60px;height:20px;line-height:20px;font-size:14.7px;color:#111;">Emplacement</div>
<div style="left:1421px;top:256px;width:435px;height:25px;background:#fff;border:1px solid #a8a8a8;box-sizing:border-box"></div>
<div style="left:1839px;top:258px;width:15px;height:21px;background:#dcdcdc"></div>
<svg style="position:absolute;left:1844px;top:267px" width="6" height="4" viewBox="0 0 6 4"><path d="M0 0 L5.5 0 L2.75 3.2 Z" fill="#444"/></svg>
<div style="left:1421px;top:314px;width:435px;height:25px;background:#fff;border:1px solid #a8a8a8;box-sizing:border-box"></div>
<div style="left:1839px;top:316px;width:15px;height:21px;background:#dcdcdc"></div>
<svg style="position:absolute;left:1844px;top:325px" width="6" height="4" viewBox="0 0 6 4"><path d="M0 0 L5.5 0 L2.75 3.2 Z" fill="#444"/></svg>
<div style="left:23px;top:393px;width:931px;height:513px;background:#fff;border-left:1px solid #d0d0d0;box-sizing:border-box"></div>
<div style="left:24px;top:393px;width:929px;height:21px;background:#eef5fc"></div>
<div class="t" style="left:341.50px;top:394.40px;width:300px;height:18px;line-height:18px;font-size:13.6px;color:#000;font-weight:bold;text-align:center;">Pièces à sortir</div>
<div style="left:24px;top:414px;width:929px;height:20px;background:linear-gradient(#fbfbfb,#f1f1f1 50%,#e4e4e4)"></div>
<svg style="position:absolute;left:26px;top:417px" width="15" height="13" viewBox="0 0 15 13"><rect x="0" y="0" width="15" height="13" fill="#6b6b6b"/><rect x="1.3" y="1.3" width="3.2" height="2.8" fill="#fff"/><rect x="5.6" y="1.3" width="3.2" height="2.8" fill="#fff"/><rect x="1.3" y="5.2" width="3.2" height="2.8" fill="#fff"/><rect x="5.6" y="5.2" width="3.2" height="2.8" fill="#fff"/><rect x="1.3" y="9.1" width="3.2" height="2.8" fill="#fff"/><rect x="5.6" y="9.1" width="3.2" height="2.8" fill="#fff"/></svg>
<div style="left:226px;top:414px;width:1px;height:20px;background:#d4d4d4"></div>
<div class="t" style="left:37.00px;top:415.60px;width:184px;height:16px;line-height:16px;font-size:12.5px;color:#404040;text-align:center;transform:scaleX(0.88);transform-origin:50% 0">No_Phase_Affectée</div>
<svg style="position:absolute;left:215px;top:418.5px" width="9" height="9" viewBox="0 0 9 9"><path d="M0.8 0.9 L8.2 0.9 L5.4 3.9 L3.6 3.9 Z" fill="none" stroke="#7a7a7a" stroke-width="1.1" stroke-linejoin="round"/><rect x="3.6" y="3.6" width="1.8" height="4" fill="#7a7a7a"/></svg>
<div style="left:365px;top:414px;width:1px;height:20px;background:#d4d4d4"></div>
<div class="t" style="left:221.00px;top:415.60px;width:139px;height:16px;line-height:16px;font-size:12.5px;color:#404040;text-align:center;transform:scaleX(0.88);transform-origin:50% 0">Article</div>
<svg style="position:absolute;left:354px;top:418.5px" width="9" height="9" viewBox="0 0 9 9"><path d="M0.8 0.9 L8.2 0.9 L5.4 3.9 L3.6 3.9 Z" fill="none" stroke="#7a7a7a" stroke-width="1.1" stroke-linejoin="round"/><rect x="3.6" y="3.6" width="1.8" height="4" fill="#7a7a7a"/></svg>
<div style="left:504px;top:414px;width:1px;height:20px;background:#d4d4d4"></div>
<div class="t" style="left:360.00px;top:415.60px;width:139px;height:16px;line-height:16px;font-size:12.5px;color:#404040;text-align:center;transform:scaleX(0.88);transform-origin:50% 0">Description</div>
<svg style="position:absolute;left:493px;top:418.5px" width="9" height="9" viewBox="0 0 9 9"><path d="M0.8 0.9 L8.2 0.9 L5.4 3.9 L3.6 3.9 Z" fill="none" stroke="#7a7a7a" stroke-width="1.1" stroke-linejoin="round"/><rect x="3.6" y="3.6" width="1.8" height="4" fill="#7a7a7a"/></svg>
<div style="left:691px;top:414px;width:1px;height:20px;background:#d4d4d4"></div>
<div class="t" style="left:499.00px;top:415.60px;width:187px;height:16px;line-height:16px;font-size:12.5px;color:#404040;text-align:center;transform:scaleX(0.88);transform-origin:50% 0">Description_Variante</div>
<svg style="position:absolute;left:680px;top:418.5px" width="9" height="9" viewBox="0 0 9 9"><path d="M0.8 0.9 L8.2 0.9 L5.4 3.9 L3.6 3.9 Z" fill="none" stroke="#7a7a7a" stroke-width="1.1" stroke-linejoin="round"/><rect x="3.6" y="3.6" width="1.8" height="4" fill="#7a7a7a"/></svg>
<div style="left:818px;top:414px;width:1px;height:20px;background:#d4d4d4"></div>
<div class="t" style="left:686.00px;top:415.60px;width:127px;height:16px;line-height:16px;font-size:12.5px;color:#404040;text-align:center;transform:scaleX(0.88);transform-origin:50% 0">Qté_à_sortir</div>
<svg style="position:absolute;left:807px;top:418.5px" width="9" height="9" viewBox="0 0 9 9"><path d="M0.8 0.9 L8.2 0.9 L5.4 3.9 L3.6 3.9 Z" fill="none" stroke="#7a7a7a" stroke-width="1.1" stroke-linejoin="round"/><rect x="3.6" y="3.6" width="1.8" height="4" fill="#7a7a7a"/></svg>
<div class="t" style="left:813.00px;top:415.60px;width:138px;height:16px;line-height:16px;font-size:12.5px;color:#404040;text-align:center;transform:scaleX(0.88);transform-origin:50% 0">Variante</div>
<svg style="position:absolute;left:945px;top:418.5px" width="9" height="9" viewBox="0 0 9 9"><path d="M0.8 0.9 L8.2 0.9 L5.4 3.9 L3.6 3.9 Z" fill="none" stroke="#7a7a7a" stroke-width="1.1" stroke-linejoin="round"/><rect x="3.6" y="3.6" width="1.8" height="4" fill="#7a7a7a"/></svg>
<div style="left:24px;top:434px;width:19px;height:95px;background:#f0f0f0"></div>
<div style="left:24px;top:452px;width:929px;height:1px;background:#dadada"></div>
<div class="t" style="left:49.50px;top:434.80px;width:200.6px;overflow:hidden;height:16px;line-height:16px;font-size:12.5px;color:#1e1e1e;transform:scaleX(0.88);transform-origin:0 0">10</div>
<div class="t" style="left:233.50px;top:434.80px;width:149.4px;overflow:hidden;height:16px;line-height:16px;font-size:12.5px;color:#1e1e1e;transform:scaleX(0.88);transform-origin:0 0">Q17PO017</div>
<div class="t" style="left:372.50px;top:434.80px;width:149.4px;overflow:hidden;height:16px;line-height:16px;font-size:12.5px;color:#1e1e1e;transform:scaleX(0.88);transform-origin:0 0">0023 Panneau ilot eletec</div>
<div class="t" style="left:690.00px;top:434.80px;width:123px;height:16px;line-height:16px;font-size:12.5px;color:#1e1e1e;text-align:right;transform:scaleX(0.88);transform-origin:100% 0">1</div>
<div style="left:24px;top:471px;width:929px;height:1px;background:#dadada"></div>
<div class="t" style="left:49.50px;top:453.80px;width:200.6px;overflow:hidden;height:16px;line-height:16px;font-size:12.5px;color:#1e1e1e;transform:scaleX(0.88);transform-origin:0 0">20</div>
<div class="t" style="left:233.50px;top:453.80px;width:149.4px;overflow:hidden;height:16px;line-height:16px;font-size:12.5px;color:#1e1e1e;transform:scaleX(0.88);transform-origin:0 0">KIPOEQ01</div>
<div class="t" style="left:372.50px;top:453.80px;width:149.4px;overflow:hidden;height:16px;line-height:16px;font-size:12.5px;color:#1e1e1e;transform:scaleX(0.88);transform-origin:0 0">0080 - Equerre pour port</div>
<div class="t" style="left:511.50px;top:453.80px;width:204.0px;overflow:hidden;height:16px;line-height:16px;font-size:12.5px;color:#1e1e1e;transform:scaleX(0.88);transform-origin:0 0">RAL 9005</div>
<div class="t" style="left:690.00px;top:453.80px;width:123px;height:16px;line-height:16px;font-size:12.5px;color:#1e1e1e;text-align:right;transform:scaleX(0.88);transform-origin:100% 0">1</div>
<div class="t" style="left:825.50px;top:453.80px;width:143.8px;overflow:hidden;height:16px;line-height:16px;font-size:12.5px;color:#1e1e1e;transform:scaleX(0.88);transform-origin:0 0">0001</div>
<div style="left:24px;top:490px;width:929px;height:1px;background:#dadada"></div>
<div class="t" style="left:49.50px;top:472.80px;width:200.6px;overflow:hidden;height:16px;line-height:16px;font-size:12.5px;color:#1e1e1e;transform:scaleX(0.88);transform-origin:0 0">30</div>
<div class="t" style="left:233.50px;top:472.80px;width:149.4px;overflow:hidden;height:16px;line-height:16px;font-size:12.5px;color:#1e1e1e;transform:scaleX(0.88);transform-origin:0 0">Q17PO001</div>
<div class="t" style="left:372.50px;top:472.80px;width:149.4px;overflow:hidden;height:16px;line-height:16px;font-size:12.5px;color:#1e1e1e;transform:scaleX(0.88);transform-origin:0 0">0030 - Kakemono&nbsp; eletec</div>
<div class="t" style="left:690.00px;top:472.80px;width:123px;height:16px;line-height:16px;font-size:12.5px;color:#1e1e1e;text-align:right;transform:scaleX(0.88);transform-origin:100% 0">1</div>
<div style="left:24px;top:509px;width:929px;height:1px;background:#dadada"></div>
<div class="t" style="left:49.50px;top:491.80px;width:200.6px;overflow:hidden;height:16px;line-height:16px;font-size:12.5px;color:#1e1e1e;transform:scaleX(0.88);transform-origin:0 0">40</div>
<div class="t" style="left:233.50px;top:491.80px;width:149.4px;overflow:hidden;height:16px;line-height:16px;font-size:12.5px;color:#1e1e1e;transform:scaleX(0.88);transform-origin:0 0">Q17PO101</div>
<div class="t" style="left:372.50px;top:491.80px;width:149.4px;overflow:hidden;height:16px;line-height:16px;font-size:12.5px;color:#1e1e1e;transform:scaleX(0.88);transform-origin:0 0">0154 - Petit Panneau MS</div>
<div class="t" style="left:690.00px;top:491.80px;width:123px;height:16px;line-height:16px;font-size:12.5px;color:#1e1e1e;text-align:right;transform:scaleX(0.88);transform-origin:100% 0">1</div>
<div style="left:24px;top:528px;width:929px;height:1px;background:#dadada"></div>
<div class="t" style="left:49.50px;top:510.80px;width:200.6px;overflow:hidden;height:16px;line-height:16px;font-size:12.5px;color:#1e1e1e;transform:scaleX(0.88);transform-origin:0 0">50</div>
<div class="t" style="left:233.50px;top:510.80px;width:149.4px;overflow:hidden;height:16px;line-height:16px;font-size:12.5px;color:#1e1e1e;transform:scaleX(0.88);transform-origin:0 0">QXPPLP01</div>
<div class="t" style="left:372.50px;top:510.80px;width:149.4px;overflow:hidden;height:16px;line-height:16px;font-size:12.5px;color:#1e1e1e;transform:scaleX(0.88);transform-origin:0 0">0150 - Panneau affichag</div>
<div class="t" style="left:690.00px;top:510.80px;width:123px;height:16px;line-height:16px;font-size:12.5px;color:#1e1e1e;text-align:right;transform:scaleX(0.88);transform-origin:100% 0">1</div>
<div style="left:42px;top:434px;width:1px;height:95px;background:#dadada"></div>
<div style="left:226px;top:434px;width:1px;height:95px;background:#dadada"></div>
<div style="left:365px;top:434px;width:1px;height:95px;background:#dadada"></div>
<div style="left:504px;top:434px;width:1px;height:95px;background:#dadada"></div>
<div style="left:691px;top:434px;width:1px;height:95px;background:#dadada"></div>
<div style="left:818px;top:434px;width:1px;height:95px;background:#dadada"></div>
<div style="left:952px;top:434px;width:1px;height:95px;background:#dadada"></div>
<svg style="position:absolute;left:31px;top:439px" width="6" height="10" viewBox="0 0 6 10"><path d="M0 0 L5.5 4.7 L0 9.4 Z" fill="#333"/></svg>
<div style="left:23px;top:906px;width:931px;height:6px;background:#efefef;border-top:1px solid #a9a9a9;border-bottom:1px solid #a9a9a9;box-sizing:border-box"></div>
<div style="left:472px;top:907px;width:36px;height:4px;background:#c7e1f6"></div>
<svg style="position:absolute;left:486px;top:907px" width="7" height="4" viewBox="0 0 7 4"><path d="M0 0 L6 0 L3 3 Z" fill="#fff"/></svg>
<div style="left:23px;top:912px;width:931px;height:186px;background:#fff;border-left:1px solid #d0d0d0;border-bottom:1px solid #d8d8d8;box-sizing:border-box"></div>
<div style="left:24px;top:912px;width:929px;height:21px;background:#eef5fc"></div>
<div class="t" style="left:340.50px;top:913.50px;width:300px;height:18px;line-height:18px;font-size:13.6px;color:#000;font-weight:bold;text-align:center;">Sorties Effectuées</div>
<div style="left:24px;top:933px;width:929px;height:20px;background:linear-gradient(#fbfbfb,#f1f1f1 50%,#e4e4e4)"></div>
<svg style="position:absolute;left:26px;top:936px" width="15" height="13" viewBox="0 0 15 13"><rect x="0" y="0" width="15" height="13" fill="#6b6b6b"/><rect x="1.3" y="1.3" width="3.2" height="2.8" fill="#fff"/><rect x="5.6" y="1.3" width="3.2" height="2.8" fill="#fff"/><rect x="1.3" y="5.2" width="3.2" height="2.8" fill="#fff"/><rect x="5.6" y="5.2" width="3.2" height="2.8" fill="#fff"/><rect x="1.3" y="9.1" width="3.2" height="2.8" fill="#fff"/><rect x="5.6" y="9.1" width="3.2" height="2.8" fill="#fff"/></svg>
<div style="left:175px;top:933px;width:1px;height:20px;background:#d4d4d4"></div>
<div class="t" style="left:37.00px;top:934.60px;width:133px;height:16px;line-height:16px;font-size:12.5px;color:#404040;text-align:center;transform:scaleX(0.88);transform-origin:50% 0">Article</div>
<svg style="position:absolute;left:164px;top:937.5px" width="9" height="9" viewBox="0 0 9 9"><path d="M0.8 0.9 L8.2 0.9 L5.4 3.9 L3.6 3.9 Z" fill="none" stroke="#7a7a7a" stroke-width="1.1" stroke-linejoin="round"/><rect x="3.6" y="3.6" width="1.8" height="4" fill="#7a7a7a"/></svg>
<div style="left:302px;top:933px;width:1px;height:20px;background:#d4d4d4"></div>
<div class="t" style="left:170.00px;top:934.60px;width:127px;height:16px;line-height:16px;font-size:12.5px;color:#404040;text-align:center;transform:scaleX(0.88);transform-origin:50% 0">Description</div>
<svg style="position:absolute;left:291px;top:937.5px" width="9" height="9" viewBox="0 0 9 9"><path d="M0.8 0.9 L8.2 0.9 L5.4 3.9 L3.6 3.9 Z" fill="none" stroke="#7a7a7a" stroke-width="1.1" stroke-linejoin="round"/><rect x="3.6" y="3.6" width="1.8" height="4" fill="#7a7a7a"/></svg>
<div style="left:429px;top:933px;width:1px;height:20px;background:#d4d4d4"></div>
<div class="t" style="left:297.00px;top:934.60px;width:127px;height:16px;line-height:16px;font-size:12.5px;color:#404040;text-align:center;transform:scaleX(0.88);transform-origin:50% 0">Variante</div>
<svg style="position:absolute;left:418px;top:937.5px" width="9" height="9" viewBox="0 0 9 9"><path d="M0.8 0.9 L8.2 0.9 L5.4 3.9 L3.6 3.9 Z" fill="none" stroke="#7a7a7a" stroke-width="1.1" stroke-linejoin="round"/><rect x="3.6" y="3.6" width="1.8" height="4" fill="#7a7a7a"/></svg>
<div style="left:600px;top:933px;width:1px;height:20px;background:#d4d4d4"></div>
<div class="t" style="left:424.00px;top:934.60px;width:171px;height:16px;line-height:16px;font-size:12.5px;color:#404040;text-align:center;transform:scaleX(0.88);transform-origin:50% 0">Description_Variante</div>
<svg style="position:absolute;left:589px;top:937.5px" width="9" height="9" viewBox="0 0 9 9"><path d="M0.8 0.9 L8.2 0.9 L5.4 3.9 L3.6 3.9 Z" fill="none" stroke="#7a7a7a" stroke-width="1.1" stroke-linejoin="round"/><rect x="3.6" y="3.6" width="1.8" height="4" fill="#7a7a7a"/></svg>
<div style="left:703px;top:933px;width:1px;height:20px;background:#d4d4d4"></div>
<div class="t" style="left:595.00px;top:934.60px;width:103px;height:16px;line-height:16px;font-size:12.5px;color:#404040;text-align:center;transform:scaleX(0.88);transform-origin:50% 0">Quantité</div>
<svg style="position:absolute;left:692px;top:937.5px" width="9" height="9" viewBox="0 0 9 9"><path d="M0.8 0.9 L8.2 0.9 L5.4 3.9 L3.6 3.9 Z" fill="none" stroke="#7a7a7a" stroke-width="1.1" stroke-linejoin="round"/><rect x="3.6" y="3.6" width="1.8" height="4" fill="#7a7a7a"/></svg>
<div style="left:830px;top:933px;width:1px;height:20px;background:#d4d4d4"></div>
<div class="t" style="left:698.00px;top:934.60px;width:127px;height:16px;line-height:16px;font-size:12.5px;color:#404040;text-align:center;transform:scaleX(0.88);transform-origin:50% 0">Lieu_Stk</div>
<svg style="position:absolute;left:819px;top:937.5px" width="9" height="9" viewBox="0 0 9 9"><path d="M0.8 0.9 L8.2 0.9 L5.4 3.9 L3.6 3.9 Z" fill="none" stroke="#7a7a7a" stroke-width="1.1" stroke-linejoin="round"/><rect x="3.6" y="3.6" width="1.8" height="4" fill="#7a7a7a"/></svg>
<div class="t" style="left:825.00px;top:934.60px;width:126px;height:16px;line-height:16px;font-size:12.5px;color:#404040;text-align:center;transform:scaleX(0.88);transform-origin:50% 0">Emplacement</div>
<svg style="position:absolute;left:945px;top:937.5px" width="9" height="9" viewBox="0 0 9 9"><path d="M0.8 0.9 L8.2 0.9 L5.4 3.9 L3.6 3.9 Z" fill="none" stroke="#7a7a7a" stroke-width="1.1" stroke-linejoin="round"/><rect x="3.6" y="3.6" width="1.8" height="4" fill="#7a7a7a"/></svg>
<div style="left:953px;top:393px;width:6px;height:704px;background:#efefef;border-left:1px solid #a9a9a9;border-right:1px solid #a9a9a9;box-sizing:border-box"></div>
<div style="left:954px;top:728px;width:4px;height:35px;background:#c7e1f6"></div>
<svg style="position:absolute;left:954px;top:742px" width="4" height="7" viewBox="0 0 4 7"><path d="M0 0 L3.5 3.5 L0 7 Z" fill="#fff"/></svg>
<div style="left:959px;top:393px;width:936px;height:349px;background:#fff"></div>
<div style="left:959px;top:393px;width:936px;height:21px;background:#eef5fc"></div>
<div class="t" style="left:1277.00px;top:394.40px;width:300px;height:18px;line-height:18px;font-size:13.6px;color:#000;font-weight:bold;text-align:center;">Suggestions de sorties</div>
<div style="left:959px;top:414px;width:935px;height:20px;background:linear-gradient(#fbfbfb,#f1f1f1 50%,#e4e4e4)"></div>
<svg style="position:absolute;left:961px;top:417px" width="15" height="13" viewBox="0 0 15 13"><rect x="0" y="0" width="15" height="13" fill="#6b6b6b"/><rect x="1.3" y="1.3" width="3.2" height="2.8" fill="#fff"/><rect x="5.6" y="1.3" width="3.2" height="2.8" fill="#fff"/><rect x="1.3" y="5.2" width="3.2" height="2.8" fill="#fff"/><rect x="5.6" y="5.2" width="3.2" height="2.8" fill="#fff"/><rect x="1.3" y="9.1" width="3.2" height="2.8" fill="#fff"/><rect x="5.6" y="9.1" width="3.2" height="2.8" fill="#fff"/></svg>
<div style="left:1087px;top:414px;width:1px;height:20px;background:#d4d4d4"></div>
<div class="t" style="left:973.00px;top:415.60px;width:109px;height:16px;line-height:16px;font-size:12.5px;color:#404040;text-align:center;transform:scaleX(0.88);transform-origin:50% 0">No_Phase_Affect</div>
<svg style="position:absolute;left:1076px;top:418.5px" width="9" height="9" viewBox="0 0 9 9"><path d="M0.8 0.9 L8.2 0.9 L5.4 3.9 L3.6 3.9 Z" fill="none" stroke="#7a7a7a" stroke-width="1.1" stroke-linejoin="round"/><rect x="3.6" y="3.6" width="1.8" height="4" fill="#7a7a7a"/></svg>
<div style="left:1172px;top:414px;width:1px;height:20px;background:#d4d4d4"></div>
<div class="t" style="left:1082.00px;top:415.60px;width:85px;height:16px;line-height:16px;font-size:12.5px;color:#404040;text-align:center;transform:scaleX(0.88);transform-origin:50% 0">Article</div>
<svg style="position:absolute;left:1161px;top:418.5px" width="9" height="9" viewBox="0 0 9 9"><path d="M0.8 0.9 L8.2 0.9 L5.4 3.9 L3.6 3.9 Z" fill="none" stroke="#7a7a7a" stroke-width="1.1" stroke-linejoin="round"/><rect x="3.6" y="3.6" width="1.8" height="4" fill="#7a7a7a"/></svg>
<div style="left:1257px;top:414px;width:1px;height:20px;background:#d4d4d4"></div>
<div class="t" style="left:1167.00px;top:415.60px;width:85px;height:16px;line-height:16px;font-size:12.5px;color:#404040;text-align:center;transform:scaleX(0.88);transform-origin:50% 0">Description</div>
<svg style="position:absolute;left:1246px;top:418.5px" width="9" height="9" viewBox="0 0 9 9"><path d="M0.8 0.9 L8.2 0.9 L5.4 3.9 L3.6 3.9 Z" fill="none" stroke="#7a7a7a" stroke-width="1.1" stroke-linejoin="round"/><rect x="3.6" y="3.6" width="1.8" height="4" fill="#7a7a7a"/></svg>
<div style="left:1371px;top:414px;width:1px;height:20px;background:#d4d4d4"></div>
<div class="t" style="left:1252.00px;top:415.60px;width:114px;height:16px;line-height:16px;font-size:12.5px;color:#404040;text-align:center;transform:scaleX(0.88);transform-origin:50% 0">Description_Varian</div>
<svg style="position:absolute;left:1360px;top:418.5px" width="9" height="9" viewBox="0 0 9 9"><path d="M0.8 0.9 L8.2 0.9 L5.4 3.9 L3.6 3.9 Z" fill="none" stroke="#7a7a7a" stroke-width="1.1" stroke-linejoin="round"/><rect x="3.6" y="3.6" width="1.8" height="4" fill="#7a7a7a"/></svg>
<div style="left:1440px;top:414px;width:1px;height:20px;background:#d4d4d4"></div>
<div class="t" style="left:1366.00px;top:415.60px;width:69px;height:16px;line-height:16px;font-size:12.5px;color:#404040;text-align:center;transform:scaleX(0.88);transform-origin:50% 0">A_sortir</div>
<svg style="position:absolute;left:1429px;top:418.5px" width="9" height="9" viewBox="0 0 9 9"><path d="M0.8 0.9 L8.2 0.9 L5.4 3.9 L3.6 3.9 Z" fill="none" stroke="#7a7a7a" stroke-width="1.1" stroke-linejoin="round"/><rect x="3.6" y="3.6" width="1.8" height="4" fill="#7a7a7a"/></svg>
<div style="left:1525px;top:414px;width:1px;height:20px;background:#d4d4d4"></div>
<div class="t" style="left:1435.00px;top:415.60px;width:85px;height:16px;line-height:16px;font-size:12.5px;color:#404040;text-align:center;transform:scaleX(0.88);transform-origin:50% 0">Variante</div>
<svg style="position:absolute;left:1514px;top:418.5px" width="9" height="9" viewBox="0 0 9 9"><path d="M0.8 0.9 L8.2 0.9 L5.4 3.9 L3.6 3.9 Z" fill="none" stroke="#7a7a7a" stroke-width="1.1" stroke-linejoin="round"/><rect x="3.6" y="3.6" width="1.8" height="4" fill="#7a7a7a"/></svg>
<div style="left:1610px;top:414px;width:1px;height:20px;background:#d4d4d4"></div>
<div class="t" style="left:1520.00px;top:415.60px;width:85px;height:16px;line-height:16px;font-size:12.5px;color:#404040;text-align:center;transform:scaleX(0.88);transform-origin:50% 0">Lieu_Stk</div>
<svg style="position:absolute;left:1599px;top:418.5px" width="9" height="9" viewBox="0 0 9 9"><path d="M0.8 0.9 L8.2 0.9 L5.4 3.9 L3.6 3.9 Z" fill="none" stroke="#7a7a7a" stroke-width="1.1" stroke-linejoin="round"/><rect x="3.6" y="3.6" width="1.8" height="4" fill="#7a7a7a"/></svg>
<div style="left:1695px;top:414px;width:1px;height:20px;background:#d4d4d4"></div>
<div class="t" style="left:1605.00px;top:415.60px;width:85px;height:16px;line-height:16px;font-size:12.5px;color:#404040;text-align:center;transform:scaleX(0.88);transform-origin:50% 0">Emplacemen</div>
<svg style="position:absolute;left:1684px;top:418.5px" width="9" height="9" viewBox="0 0 9 9"><path d="M0.8 0.9 L8.2 0.9 L5.4 3.9 L3.6 3.9 Z" fill="none" stroke="#7a7a7a" stroke-width="1.1" stroke-linejoin="round"/><rect x="3.6" y="3.6" width="1.8" height="4" fill="#7a7a7a"/></svg>
<div style="left:1780px;top:414px;width:1px;height:20px;background:#d4d4d4"></div>
<div class="t" style="left:1690.00px;top:415.60px;width:85px;height:16px;line-height:16px;font-size:12.5px;color:#404040;text-align:center;transform:scaleX(0.88);transform-origin:50% 0">No_Lot</div>
<svg style="position:absolute;left:1769px;top:418.5px" width="9" height="9" viewBox="0 0 9 9"><path d="M0.8 0.9 L8.2 0.9 L5.4 3.9 L3.6 3.9 Z" fill="none" stroke="#7a7a7a" stroke-width="1.1" stroke-linejoin="round"/><rect x="3.6" y="3.6" width="1.8" height="4" fill="#7a7a7a"/></svg>
<div style="left:1893px;top:414px;width:1px;height:20px;background:#d4d4d4"></div>
<div class="t" style="left:1775.00px;top:415.60px;width:113px;height:16px;line-height:16px;font-size:12.5px;color:#404040;text-align:center;transform:scaleX(0.88);transform-origin:50% 0">No_Série_ou_SS</div>
<svg style="position:absolute;left:1882px;top:418.5px" width="9" height="9" viewBox="0 0 9 9"><path d="M0.8 0.9 L8.2 0.9 L5.4 3.9 L3.6 3.9 Z" fill="none" stroke="#7a7a7a" stroke-width="1.1" stroke-linejoin="round"/><rect x="3.6" y="3.6" width="1.8" height="4" fill="#7a7a7a"/></svg>
<div style="left:959px;top:434px;width:20px;height:19px;background:#f0f0f0"></div>
<div style="left:959px;top:452px;width:935px;height:1px;background:#dadada"></div>
<div class="t" style="left:985.50px;top:434.80px;width:115.3px;overflow:hidden;height:16px;line-height:16px;font-size:12.5px;color:#1e1e1e;transform:scaleX(0.88);transform-origin:0 0">20</div>
<div class="t" style="left:1094.50px;top:434.80px;width:88.1px;overflow:hidden;height:16px;line-height:16px;font-size:12.5px;color:#1e1e1e;transform:scaleX(0.88);transform-origin:0 0">KIPOEQ01</div>
<div class="t" style="left:1179.50px;top:434.80px;width:88.1px;overflow:hidden;height:16px;line-height:16px;font-size:12.5px;color:#1e1e1e;transform:scaleX(0.88);transform-origin:0 0">0080 - Equerr</div>
<div class="t" style="left:1264.50px;top:434.80px;width:121.0px;overflow:hidden;height:16px;line-height:16px;font-size:12.5px;color:#1e1e1e;transform:scaleX(0.88);transform-origin:0 0">RAL 9005</div>
<div class="t" style="left:1370.00px;top:434.80px;width:65px;height:16px;line-height:16px;font-size:12.5px;color:#1e1e1e;text-align:right;transform:scaleX(0.88);transform-origin:100% 0">1</div>
<div class="t" style="left:1447.50px;top:434.80px;width:88.1px;overflow:hidden;height:16px;line-height:16px;font-size:12.5px;color:#1e1e1e;transform:scaleX(0.88);transform-origin:0 0">0001</div>
<div style="left:978px;top:434px;width:1px;height:19px;background:#dadada"></div>
<div style="left:1087px;top:434px;width:1px;height:19px;background:#dadada"></div>
<div style="left:1172px;top:434px;width:1px;height:19px;background:#dadada"></div>
<div style="left:1257px;top:434px;width:1px;height:19px;background:#dadada"></div>
<div style="left:1371px;top:434px;width:1px;height:19px;background:#dadada"></div>
<div style="left:1440px;top:434px;width:1px;height:19px;background:#dadada"></div>
<div style="left:1525px;top:434px;width:1px;height:19px;background:#dadada"></div>
<div style="left:1610px;top:434px;width:1px;height:19px;background:#dadada"></div>
<div style="left:1695px;top:434px;width:1px;height:19px;background:#dadada"></div>
<div style="left:1780px;top:434px;width:1px;height:19px;background:#dadada"></div>
<div style="left:1893px;top:434px;width:1px;height:19px;background:#dadada"></div>
<svg style="position:absolute;left:966px;top:439px" width="6" height="10" viewBox="0 0 6 10"><path d="M0 0 L5.5 4.7 L0 9.4 Z" fill="#333"/></svg>
<div style="left:959px;top:742px;width:936px;height:6px;background:#efefef;border-top:1px solid #a9a9a9;border-bottom:1px solid #a9a9a9;box-sizing:border-box"></div>
<div style="left:1408px;top:743px;width:37px;height:4px;background:#c7e1f6"></div>
<svg style="position:absolute;left:1423px;top:743px" width="7" height="4" viewBox="0 0 7 4"><path d="M0 0 L6 0 L3 3 Z" fill="#fff"/></svg>
<div style="left:959px;top:748px;width:936px;height:117px;background:#eef5fc"></div>
<div style="left:959px;top:748px;width:936px;height:21px;background:#eef5fc"></div>
<div class="t" style="left:1277.00px;top:749.50px;width:300px;height:18px;line-height:18px;font-size:13.6px;color:#000;font-weight:bold;text-align:center;">Indisponibles</div>
<div style="left:959px;top:769px;width:918px;height:20px;background:linear-gradient(#fbfbfb,#f1f1f1 50%,#e4e4e4)"></div>
<svg style="position:absolute;left:961px;top:772px" width="15" height="13" viewBox="0 0 15 13"><rect x="0" y="0" width="15" height="13" fill="#6b6b6b"/><rect x="1.3" y="1.3" width="3.2" height="2.8" fill="#fff"/><rect x="5.6" y="1.3" width="3.2" height="2.8" fill="#fff"/><rect x="1.3" y="5.2" width="3.2" height="2.8" fill="#fff"/><rect x="5.6" y="5.2" width="3.2" height="2.8" fill="#fff"/><rect x="1.3" y="9.1" width="3.2" height="2.8" fill="#fff"/><rect x="5.6" y="9.1" width="3.2" height="2.8" fill="#fff"/></svg>
<div style="left:1080px;top:769px;width:1px;height:20px;background:#d4d4d4"></div>
<div class="t" style="left:973.00px;top:770.60px;width:102px;height:16px;line-height:16px;font-size:12.5px;color:#404040;text-align:center;transform:scaleX(0.88);transform-origin:50% 0">No_Phase_Affe</div>
<svg style="position:absolute;left:1069px;top:773.5px" width="9" height="9" viewBox="0 0 9 9"><path d="M0.8 0.9 L8.2 0.9 L5.4 3.9 L3.6 3.9 Z" fill="none" stroke="#7a7a7a" stroke-width="1.1" stroke-linejoin="round"/><rect x="3.6" y="3.6" width="1.8" height="4" fill="#7a7a7a"/></svg>
<div style="left:1161px;top:769px;width:1px;height:20px;background:#d4d4d4"></div>
<div class="t" style="left:1075.00px;top:770.60px;width:81px;height:16px;line-height:16px;font-size:12.5px;color:#404040;text-align:center;transform:scaleX(0.88);transform-origin:50% 0">Article</div>
<svg style="position:absolute;left:1150px;top:773.5px" width="9" height="9" viewBox="0 0 9 9"><path d="M0.8 0.9 L8.2 0.9 L5.4 3.9 L3.6 3.9 Z" fill="none" stroke="#7a7a7a" stroke-width="1.1" stroke-linejoin="round"/><rect x="3.6" y="3.6" width="1.8" height="4" fill="#7a7a7a"/></svg>
<div style="left:1242px;top:769px;width:1px;height:20px;background:#d4d4d4"></div>
<div class="t" style="left:1156.00px;top:770.60px;width:81px;height:16px;line-height:16px;font-size:12.5px;color:#404040;text-align:center;transform:scaleX(0.88);transform-origin:50% 0">Description</div>
<svg style="position:absolute;left:1231px;top:773.5px" width="9" height="9" viewBox="0 0 9 9"><path d="M0.8 0.9 L8.2 0.9 L5.4 3.9 L3.6 3.9 Z" fill="none" stroke="#7a7a7a" stroke-width="1.1" stroke-linejoin="round"/><rect x="3.6" y="3.6" width="1.8" height="4" fill="#7a7a7a"/></svg>
<div style="left:1351px;top:769px;width:1px;height:20px;background:#d4d4d4"></div>
<div class="t" style="left:1237.00px;top:770.60px;width:109px;height:16px;line-height:16px;font-size:12.5px;color:#404040;text-align:center;transform:scaleX(0.88);transform-origin:50% 0">Description_Varia</div>
<svg style="position:absolute;left:1340px;top:773.5px" width="9" height="9" viewBox="0 0 9 9"><path d="M0.8 0.9 L8.2 0.9 L5.4 3.9 L3.6 3.9 Z" fill="none" stroke="#7a7a7a" stroke-width="1.1" stroke-linejoin="round"/><rect x="3.6" y="3.6" width="1.8" height="4" fill="#7a7a7a"/></svg>
<div style="left:1444px;top:769px;width:1px;height:20px;background:#d4d4d4"></div>
<div class="t" style="left:1346.00px;top:770.60px;width:93px;height:16px;line-height:16px;font-size:12.5px;color:#404040;text-align:center;transform:scaleX(0.88);transform-origin:50% 0">Qté_Indisponi</div>
<svg style="position:absolute;left:1433px;top:773.5px" width="9" height="9" viewBox="0 0 9 9"><path d="M0.8 0.9 L8.2 0.9 L5.4 3.9 L3.6 3.9 Z" fill="none" stroke="#7a7a7a" stroke-width="1.1" stroke-linejoin="round"/><rect x="3.6" y="3.6" width="1.8" height="4" fill="#7a7a7a"/></svg>
<div style="left:1525px;top:769px;width:1px;height:20px;background:#d4d4d4"></div>
<div class="t" style="left:1439.00px;top:770.60px;width:81px;height:16px;line-height:16px;font-size:12.5px;color:#404040;text-align:center;transform:scaleX(0.88);transform-origin:50% 0">Variante</div>
<svg style="position:absolute;left:1514px;top:773.5px" width="9" height="9" viewBox="0 0 9 9"><path d="M0.8 0.9 L8.2 0.9 L5.4 3.9 L3.6 3.9 Z" fill="none" stroke="#7a7a7a" stroke-width="1.1" stroke-linejoin="round"/><rect x="3.6" y="3.6" width="1.8" height="4" fill="#7a7a7a"/></svg>
<div style="left:1606px;top:769px;width:1px;height:20px;background:#d4d4d4"></div>
<div class="t" style="left:1520.00px;top:770.60px;width:81px;height:16px;line-height:16px;font-size:12.5px;color:#404040;text-align:center;transform:scaleX(0.88);transform-origin:50% 0">Lieu_Stk</div>
<svg style="position:absolute;left:1595px;top:773.5px" width="9" height="9" viewBox="0 0 9 9"><path d="M0.8 0.9 L8.2 0.9 L5.4 3.9 L3.6 3.9 Z" fill="none" stroke="#7a7a7a" stroke-width="1.1" stroke-linejoin="round"/><rect x="3.6" y="3.6" width="1.8" height="4" fill="#7a7a7a"/></svg>
<div style="left:1687px;top:769px;width:1px;height:20px;background:#d4d4d4"></div>
<div class="t" style="left:1601.00px;top:770.60px;width:81px;height:16px;line-height:16px;font-size:12.5px;color:#404040;text-align:center;transform:scaleX(0.88);transform-origin:50% 0">Emplaceme</div>
<svg style="position:absolute;left:1676px;top:773.5px" width="9" height="9" viewBox="0 0 9 9"><path d="M0.8 0.9 L8.2 0.9 L5.4 3.9 L3.6 3.9 Z" fill="none" stroke="#7a7a7a" stroke-width="1.1" stroke-linejoin="round"/><rect x="3.6" y="3.6" width="1.8" height="4" fill="#7a7a7a"/></svg>
<div style="left:1768px;top:769px;width:1px;height:20px;background:#d4d4d4"></div>
<div class="t" style="left:1682.00px;top:770.60px;width:81px;height:16px;line-height:16px;font-size:12.5px;color:#404040;text-align:center;transform:scaleX(0.88);transform-origin:50% 0">No_Lot</div>
<svg style="position:absolute;left:1757px;top:773.5px" width="9" height="9" viewBox="0 0 9 9"><path d="M0.8 0.9 L8.2 0.9 L5.4 3.9 L3.6 3.9 Z" fill="none" stroke="#7a7a7a" stroke-width="1.1" stroke-linejoin="round"/><rect x="3.6" y="3.6" width="1.8" height="4" fill="#7a7a7a"/></svg>
<div style="left:1876px;top:769px;width:1px;height:20px;background:#d4d4d4"></div>
<div class="t" style="left:1763.00px;top:770.60px;width:108px;height:16px;line-height:16px;font-size:12.5px;color:#404040;text-align:center;transform:scaleX(0.88);transform-origin:50% 0">No_Série_ou_SS</div>
<svg style="position:absolute;left:1865px;top:773.5px" width="9" height="9" viewBox="0 0 9 9"><path d="M0.8 0.9 L8.2 0.9 L5.4 3.9 L3.6 3.9 Z" fill="none" stroke="#7a7a7a" stroke-width="1.1" stroke-linejoin="round"/><rect x="3.6" y="3.6" width="1.8" height="4" fill="#7a7a7a"/></svg>
<div style="left:959px;top:789px;width:917px;height:76px;background:#fff"></div>
<div style="left:959px;top:789px;width:20px;height:76px;background:#f0f0f0"></div>
<div style="left:959px;top:807px;width:918px;height:1px;background:#dadada"></div>
<div class="t" style="left:985.50px;top:789.80px;width:107.4px;overflow:hidden;height:16px;line-height:16px;font-size:12.5px;color:#1e1e1e;transform:scaleX(0.88);transform-origin:0 0">10</div>
<div class="t" style="left:1087.50px;top:789.80px;width:83.5px;overflow:hidden;height:16px;line-height:16px;font-size:12.5px;color:#1e1e1e;transform:scaleX(0.88);transform-origin:0 0">Q17PO017</div>
<div class="t" style="left:1168.50px;top:789.80px;width:83.5px;overflow:hidden;height:16px;line-height:16px;font-size:12.5px;color:#1e1e1e;transform:scaleX(0.88);transform-origin:0 0">0023 Pannea</div>
<div class="t" style="left:1350.00px;top:789.80px;width:89px;height:16px;line-height:16px;font-size:12.5px;color:#1e1e1e;text-align:right;transform:scaleX(0.88);transform-origin:100% 0">1</div>
<div style="left:959px;top:826px;width:918px;height:1px;background:#dadada"></div>
<div class="t" style="left:985.50px;top:808.80px;width:107.4px;overflow:hidden;height:16px;line-height:16px;font-size:12.5px;color:#1e1e1e;transform:scaleX(0.88);transform-origin:0 0">30</div>
<div class="t" style="left:1087.50px;top:808.80px;width:83.5px;overflow:hidden;height:16px;line-height:16px;font-size:12.5px;color:#1e1e1e;transform:scaleX(0.88);transform-origin:0 0">Q17PO001</div>
<div class="t" style="left:1168.50px;top:808.80px;width:83.5px;overflow:hidden;height:16px;line-height:16px;font-size:12.5px;color:#1e1e1e;transform:scaleX(0.88);transform-origin:0 0">0030 - Kakem</div>
<div class="t" style="left:1350.00px;top:808.80px;width:89px;height:16px;line-height:16px;font-size:12.5px;color:#1e1e1e;text-align:right;transform:scaleX(0.88);transform-origin:100% 0">1</div>
<div style="left:959px;top:845px;width:918px;height:1px;background:#dadada"></div>
<div class="t" style="left:985.50px;top:827.80px;width:107.4px;overflow:hidden;height:16px;line-height:16px;font-size:12.5px;color:#1e1e1e;transform:scaleX(0.88);transform-origin:0 0">40</div>
<div class="t" style="left:1087.50px;top:827.80px;width:83.5px;overflow:hidden;height:16px;line-height:16px;font-size:12.5px;color:#1e1e1e;transform:scaleX(0.88);transform-origin:0 0">Q17PO101</div>
<div class="t" style="left:1168.50px;top:827.80px;width:83.5px;overflow:hidden;height:16px;line-height:16px;font-size:12.5px;color:#1e1e1e;transform:scaleX(0.88);transform-origin:0 0">0154 - Petit P</div>
<div class="t" style="left:1350.00px;top:827.80px;width:89px;height:16px;line-height:16px;font-size:12.5px;color:#1e1e1e;text-align:right;transform:scaleX(0.88);transform-origin:100% 0">1</div>
<div style="left:959px;top:864px;width:918px;height:1px;background:#dadada"></div>
<div class="t" style="left:985.50px;top:846.80px;width:107.4px;overflow:hidden;height:16px;line-height:16px;font-size:12.5px;color:#1e1e1e;transform:scaleX(0.88);transform-origin:0 0">50</div>
<div class="t" style="left:1087.50px;top:846.80px;width:83.5px;overflow:hidden;height:16px;line-height:16px;font-size:12.5px;color:#1e1e1e;transform:scaleX(0.88);transform-origin:0 0">QXPPLP01</div>
<div class="t" style="left:1168.50px;top:846.80px;width:83.5px;overflow:hidden;height:16px;line-height:16px;font-size:12.5px;color:#1e1e1e;transform:scaleX(0.88);transform-origin:0 0">0150 - Panne</div>
<div class="t" style="left:1350.00px;top:846.80px;width:89px;height:16px;line-height:16px;font-size:12.5px;color:#1e1e1e;text-align:right;transform:scaleX(0.88);transform-origin:100% 0">1</div>
<div style="left:978px;top:789px;width:1px;height:76px;background:#dadada"></div>
<div style="left:1080px;top:789px;width:1px;height:76px;background:#dadada"></div>
<div style="left:1161px;top:789px;width:1px;height:76px;background:#dadada"></div>
<div style="left:1242px;top:789px;width:1px;height:76px;background:#dadada"></div>
<div style="left:1351px;top:789px;width:1px;height:76px;background:#dadada"></div>
<div style="left:1444px;top:789px;width:1px;height:76px;background:#dadada"></div>
<div style="left:1525px;top:789px;width:1px;height:76px;background:#dadada"></div>
<div style="left:1606px;top:789px;width:1px;height:76px;background:#dadada"></div>
<div style="left:1687px;top:789px;width:1px;height:76px;background:#dadada"></div>
<div style="left:1768px;top:789px;width:1px;height:76px;background:#dadada"></div>
<div style="left:1876px;top:789px;width:1px;height:76px;background:#dadada"></div>
<svg style="position:absolute;left:966px;top:794px" width="6" height="10" viewBox="0 0 6 10"><path d="M0 0 L5.5 4.7 L0 9.4 Z" fill="#333"/></svg>
<div style="left:1877px;top:769px;width:17px;height:6px;background:#fff;border:1px solid #e0e0e0;box-sizing:border-box"></div>
<div style="left:1877px;top:774px;width:17px;height:90px;background:#d6d6d6"></div>
<div style="left:1877px;top:774px;width:17px;height:17px;background:#fff;border:1px solid #a0a0a0;box-sizing:border-box"></div>
<svg style="position:absolute;left:1882px;top:780px" width="7" height="4" viewBox="0 0 7 4"><path d="M0 3.5 L3.25 0 L6.5 3.5 Z" fill="#444"/></svg>
<div style="left:1877px;top:791px;width:17px;height:28px;background:#fff;border:1px solid #a0a0a0;box-sizing:border-box"></div>
<div style="left:1877px;top:847px;width:17px;height:17px;background:#fff;border:1px solid #a0a0a0;box-sizing:border-box"></div>
<svg style="position:absolute;left:1882px;top:853px" width="7" height="4" viewBox="0 0 7 4"><path d="M0 0 L6.5 0 L3.25 3.5 Z" fill="#444"/></svg>
<div style="left:959px;top:865px;width:936px;height:21px;background:#eef5fc"></div>
<div class="t" style="left:1277.00px;top:866.50px;width:300px;height:18px;line-height:18px;font-size:13.6px;color:#000;font-weight:bold;text-align:center;">Remplacements</div>
<div style="left:959px;top:886px;width:936px;height:95px;background:#fff"></div>
<svg style="position:absolute;left:962px;top:889px" width="15" height="13" viewBox="0 0 15 13"><rect x="0" y="0" width="15" height="13" fill="#6b6b6b"/><rect x="1.3" y="1.3" width="3.2" height="2.8" fill="#fff"/><rect x="5.6" y="1.3" width="3.2" height="2.8" fill="#fff"/><rect x="1.3" y="5.2" width="3.2" height="2.8" fill="#fff"/><rect x="5.6" y="5.2" width="3.2" height="2.8" fill="#fff"/><rect x="1.3" y="9.1" width="3.2" height="2.8" fill="#fff"/><rect x="5.6" y="9.1" width="3.2" height="2.8" fill="#fff"/></svg>
<div style="left:959px;top:981px;width:936px;height:1px;background:#d0d0d0"></div>
<div style="left:959px;top:982px;width:936px;height:21px;background:#eef5fc"></div>
<div class="t" style="left:1277.00px;top:983.50px;width:300px;height:18px;line-height:18px;font-size:13.6px;color:#000;font-weight:bold;text-align:center;">Autres Stocks</div>
<div style="left:959px;top:1003px;width:936px;height:94px;background:#fff"></div>
<svg style="position:absolute;left:962px;top:1006px" width="15" height="13" viewBox="0 0 15 13"><rect x="0" y="0" width="15" height="13" fill="#6b6b6b"/><rect x="1.3" y="1.3" width="3.2" height="2.8" fill="#fff"/><rect x="5.6" y="1.3" width="3.2" height="2.8" fill="#fff"/><rect x="1.3" y="5.2" width="3.2" height="2.8" fill="#fff"/><rect x="5.6" y="5.2" width="3.2" height="2.8" fill="#fff"/><rect x="1.3" y="9.1" width="3.2" height="2.8" fill="#fff"/><rect x="5.6" y="9.1" width="3.2" height="2.8" fill="#fff"/></svg>
<div style="left:959px;top:1097px;width:936px;height:1px;background:#d0d0d0"></div>
<div style="left:24px;top:1110px;width:208px;height:40px;background:#f3f3f3;border:1px solid #b9b9b9;box-sizing:border-box"></div>
<div class="t" style="left:35.80px;top:1120.50px;width:200px;height:20px;line-height:20px;font-size:14.7px;color:#333;text-align:center;">Imprimer BL</div>
<svg style="position:absolute;left:32px;top:1123px" width="16" height="14" viewBox="0 0 16 14"><path d="M4 0.8 L10 0.8 L12.5 3.3 L12.5 5.5 L10.5 5.5 L10.5 3.8 L9 2.6 L5.8 2.6 L5.8 5.5 L4 5.5 Z" fill="#111"/><rect x="0.3" y="5" width="15.4" height="6" rx="1.2" fill="#111"/><rect x="3.2" y="8.3" width="9.6" height="5.2" fill="#fff" stroke="#111" stroke-width="1.3"/></svg>
<div style="left:240px;top:1110px;width:208px;height:40px;background:#f3f3f3;border:1px solid #b9b9b9;box-sizing:border-box"></div>
<div class="t" style="left:251.60px;top:1120.50px;width:200px;height:20px;line-height:20px;font-size:14.7px;color:#333;text-align:center;">Liste à sortir</div>
<svg style="position:absolute;left:248px;top:1123px" width="16" height="14" viewBox="0 0 16 14"><path d="M4 0.8 L10 0.8 L12.5 3.3 L12.5 5.5 L10.5 5.5 L10.5 3.8 L9 2.6 L5.8 2.6 L5.8 5.5 L4 5.5 Z" fill="#111"/><rect x="0.3" y="5" width="15.4" height="6" rx="1.2" fill="#111"/><rect x="3.2" y="8.3" width="9.6" height="5.2" fill="#fff" stroke="#111" stroke-width="1.3"/></svg>
<div style="left:1688px;top:1110px;width:209px;height:40px;background:#f3f3f3;border:1px solid #b9b9b9;box-sizing:border-box"></div>
<div class="t" style="left:1700.50px;top:1120.50px;width:200px;height:20px;line-height:20px;font-size:14.7px;color:#333;text-align:center;">Fermer</div>
<svg style="position:absolute;left:1697px;top:1122px" width="17" height="17" viewBox="0 0 17 17"><path d="M2 2 L15 15 M15 2 L2 15" stroke="#e8141c" stroke-width="3.6" stroke-linecap="round"/></svg></body></html>
